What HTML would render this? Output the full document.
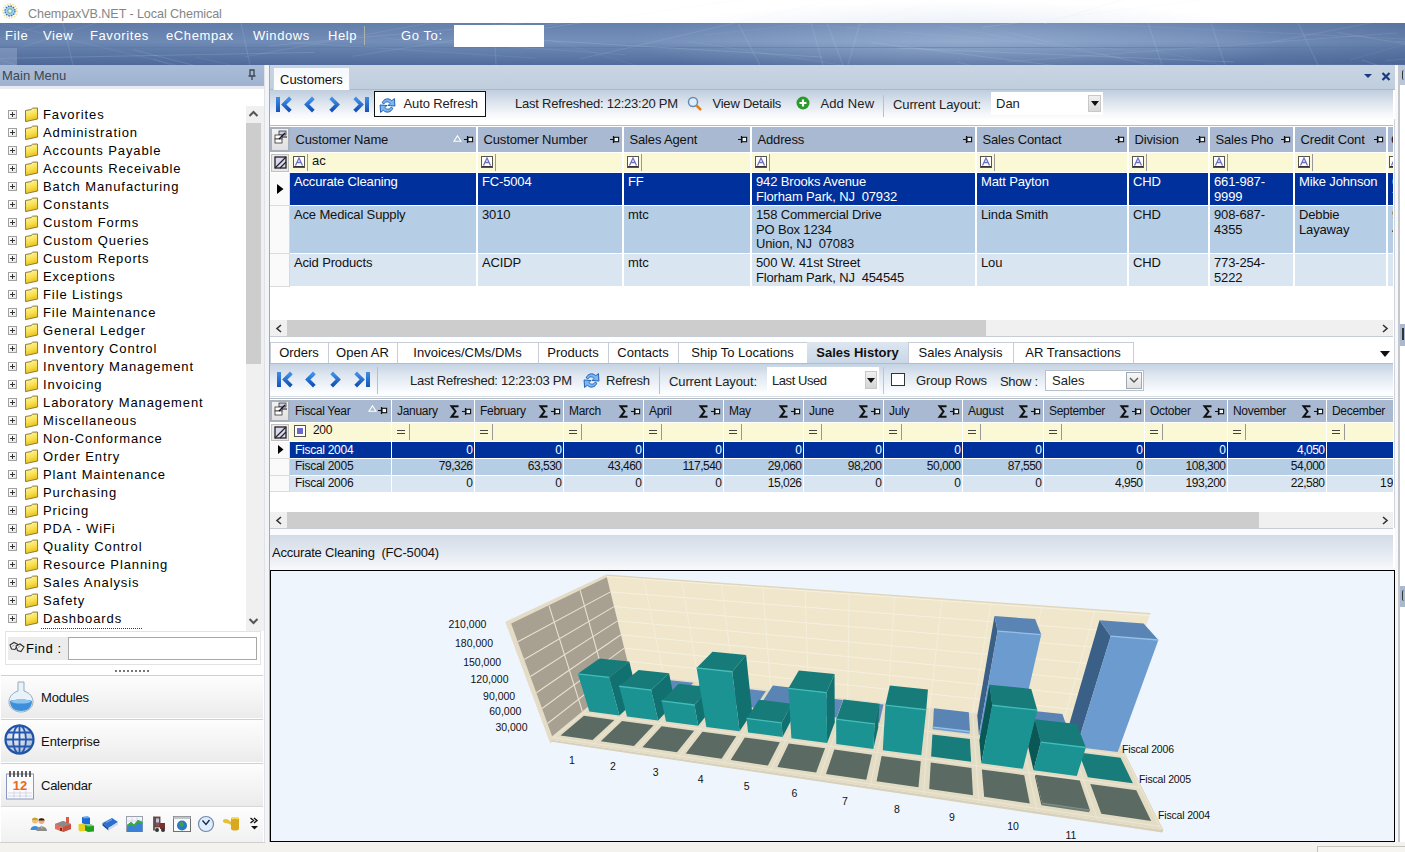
<!DOCTYPE html>
<html><head><meta charset="utf-8">
<style>
*{margin:0;padding:0;box-sizing:border-box}
html,body{width:1405px;height:852px;overflow:hidden;background:#fff;font-family:"Liberation Sans",sans-serif;font-size:13px;color:#000}
.a{position:absolute}
.t{position:absolute;white-space:pre;line-height:1}
svg{position:absolute;overflow:visible}
</style></head><body>
<div class="a" style="left:0px;top:0px;width:1405px;height:23px;background:#fff"></div>
<svg style="left:2px;top:3px" width="16" height="16" viewBox="0 0 16 16"><circle cx="8" cy="8" r="7" fill="none" stroke="#f0d890" stroke-width="1.5" stroke-dasharray="1.5 1.2"/><circle cx="8" cy="8" r="5" fill="#9fd0f0" stroke="#3070b0" stroke-width="1.3" stroke-dasharray="1.6 1"/><circle cx="8" cy="8" r="2.2" fill="#e8f4ff" stroke="#5a9a5a" stroke-width="0.8"/></svg>
<div class="t" style="left:28px;top:7.53px;font-size:12.6px;color:#858585;letter-spacing:-0.087px;">ChempaxVB.NET - Local Chemical</div>
<svg style="left:0;top:23px" width="1405" height="42" viewBox="0 0 1405 42"><defs><linearGradient id="mbv" x1="0" y1="0" x2="0" y2="1"><stop offset="0" stop-color="#6480ac"/><stop offset="0.45" stop-color="#7590ba"/><stop offset="0.6" stop-color="#6784b0"/><stop offset="1" stop-color="#516c9c"/></linearGradient><radialGradient id="mbr" cx="0.5" cy="0.5" r="0.5"><stop offset="0" stop-color="#b8cae4" stop-opacity="0.45"/><stop offset="1" stop-color="#b8cae4" stop-opacity="0"/></radialGradient><linearGradient id="mbh" x1="0" y1="0" x2="1" y2="0"><stop offset="0" stop-color="#3a5080" stop-opacity="0.15"/><stop offset="0.35" stop-color="#3a5080" stop-opacity="0"/><stop offset="0.85" stop-color="#3a5080" stop-opacity="0"/><stop offset="1" stop-color="#2a4070" stop-opacity="0.2"/></linearGradient></defs><rect width="1405" height="42" fill="url(#mbv)"/><rect width="1405" height="42" fill="url(#mbh)"/><ellipse cx="960" cy="18" rx="330" ry="40" fill="url(#mbr)"/><rect x="0" y="24" width="1405" height="1" fill="#5a76a4" fill-opacity="0.5"/><line x1="269" y1="22.9" x2="600" y2="-7.3" stroke="#dfe8f8" stroke-opacity="0.12" stroke-width="1"/><line x1="2" y1="0.6" x2="229" y2="54.4" stroke="#dfe8f8" stroke-opacity="0.08" stroke-width="1"/><line x1="1443" y1="19.8" x2="1736" y2="88.7" stroke="#dfe8f8" stroke-opacity="0.12" stroke-width="1"/><line x1="133" y1="26.7" x2="440" y2="105.7" stroke="#dfe8f8" stroke-opacity="0.13" stroke-width="1"/><line x1="941" y1="2.7" x2="1268" y2="61.9" stroke="#dfe8f8" stroke-opacity="0.08" stroke-width="1"/><line x1="-52" y1="36.4" x2="314" y2="29.4" stroke="#dfe8f8" stroke-opacity="0.15" stroke-width="1"/><line x1="1007" y1="38.7" x2="1397" y2="10.0" stroke="#dfe8f8" stroke-opacity="0.10" stroke-width="1"/><line x1="1350" y1="36.9" x2="1541" y2="-16.8" stroke="#dfe8f8" stroke-opacity="0.07" stroke-width="1"/><line x1="1396" y1="18.3" x2="1637" y2="39.6" stroke="#dfe8f8" stroke-opacity="0.11" stroke-width="1"/><line x1="498" y1="14.7" x2="823" y2="34.1" stroke="#dfe8f8" stroke-opacity="0.15" stroke-width="1"/><line x1="957" y1="39.0" x2="1404" y2="150.6" stroke="#dfe8f8" stroke-opacity="0.12" stroke-width="1"/><line x1="153" y1="36.1" x2="574" y2="173.2" stroke="#dfe8f8" stroke-opacity="0.11" stroke-width="1"/><line x1="1006" y1="8.9" x2="1328" y2="83.6" stroke="#dfe8f8" stroke-opacity="0.08" stroke-width="1"/><line x1="-2" y1="35.9" x2="175" y2="96.4" stroke="#dfe8f8" stroke-opacity="0.14" stroke-width="1"/><line x1="536" y1="6.3" x2="917" y2="-48.6" stroke="#dfe8f8" stroke-opacity="0.15" stroke-width="1"/><line x1="-32" y1="25.8" x2="334" y2="-90.6" stroke="#dfe8f8" stroke-opacity="0.09" stroke-width="1"/><line x1="1265" y1="41.2" x2="1715" y2="42.9" stroke="#dfe8f8" stroke-opacity="0.08" stroke-width="1"/><line x1="19" y1="25.2" x2="229" y2="-43.4" stroke="#dfe8f8" stroke-opacity="0.09" stroke-width="1"/><line x1="846" y1="6.6" x2="1257" y2="-124.9" stroke="#dfe8f8" stroke-opacity="0.08" stroke-width="1"/><line x1="1386" y1="37.7" x2="1674" y2="13.0" stroke="#dfe8f8" stroke-opacity="0.11" stroke-width="1"/><line x1="898" y1="25.0" x2="1234" y2="39.0" stroke="#dfe8f8" stroke-opacity="0.15" stroke-width="1"/><line x1="686" y1="18.1" x2="907" y2="52.2" stroke="#dfe8f8" stroke-opacity="0.08" stroke-width="1"/><line x1="1416" y1="21.9" x2="1569" y2="27.1" stroke="#dfe8f8" stroke-opacity="0.10" stroke-width="1"/><line x1="799" y1="0.8" x2="1139" y2="28.4" stroke="#dfe8f8" stroke-opacity="0.06" stroke-width="1"/><line x1="872" y1="19.6" x2="1128" y2="51.7" stroke="#dfe8f8" stroke-opacity="0.13" stroke-width="1"/><line x1="1044" y1="0.9" x2="1397" y2="-107.6" stroke="#dfe8f8" stroke-opacity="0.16" stroke-width="1"/><line x1="289" y1="19.2" x2="535" y2="35.1" stroke="#dfe8f8" stroke-opacity="0.09" stroke-width="1"/><line x1="385" y1="15.5" x2="625" y2="31.6" stroke="#dfe8f8" stroke-opacity="0.09" stroke-width="1"/><line x1="1097" y1="1.1" x2="1468" y2="19.1" stroke="#dfe8f8" stroke-opacity="0.08" stroke-width="1"/><line x1="245" y1="33.8" x2="451" y2="-4.0" stroke="#dfe8f8" stroke-opacity="0.10" stroke-width="1"/><line x1="982" y1="4.3" x2="1232" y2="-26.9" stroke="#dfe8f8" stroke-opacity="0.14" stroke-width="1"/><line x1="580" y1="35.9" x2="831" y2="-22.2" stroke="#dfe8f8" stroke-opacity="0.12" stroke-width="1"/><line x1="1272" y1="18.9" x2="1458" y2="-16.9" stroke="#dfe8f8" stroke-opacity="0.11" stroke-width="1"/><line x1="196" y1="33.9" x2="401" y2="82.5" stroke="#dfe8f8" stroke-opacity="0.08" stroke-width="1"/><line x1="1151" y1="27.0" x2="1405" y2="81.3" stroke="#dfe8f8" stroke-opacity="0.06" stroke-width="1"/><line x1="353" y1="33.3" x2="606" y2="-7.3" stroke="#dfe8f8" stroke-opacity="0.10" stroke-width="1"/><line x1="551" y1="17.2" x2="747" y2="75.1" stroke="#dfe8f8" stroke-opacity="0.05" stroke-width="1"/><line x1="1362" y1="37.0" x2="1642" y2="132.5" stroke="#dfe8f8" stroke-opacity="0.15" stroke-width="1"/><line x1="1337" y1="9.3" x2="1738" y2="78.2" stroke="#dfe8f8" stroke-opacity="0.12" stroke-width="1"/><line x1="704" y1="12.1" x2="923" y2="-12.1" stroke="#dfe8f8" stroke-opacity="0.06" stroke-width="1"/><line x1="827" y1="0" x2="843" y2="42" stroke="#dfe8f8" stroke-opacity="0.12" stroke-width="1.2"/><line x1="63" y1="0" x2="73" y2="42" stroke="#dfe8f8" stroke-opacity="0.12" stroke-width="1.2"/><line x1="1298" y1="0" x2="1318" y2="42" stroke="#dfe8f8" stroke-opacity="0.12" stroke-width="1.2"/><line x1="811" y1="0" x2="823" y2="42" stroke="#dfe8f8" stroke-opacity="0.12" stroke-width="1.2"/><line x1="241" y1="0" x2="250" y2="42" stroke="#dfe8f8" stroke-opacity="0.12" stroke-width="1.2"/><line x1="738" y1="0" x2="760" y2="42" stroke="#dfe8f8" stroke-opacity="0.12" stroke-width="1.2"/><line x1="860" y1="0" x2="848" y2="42" stroke="#dfe8f8" stroke-opacity="0.12" stroke-width="1.2"/><line x1="1211" y1="0" x2="1225" y2="42" stroke="#dfe8f8" stroke-opacity="0.12" stroke-width="1.2"/><line x1="494" y1="0" x2="496" y2="42" stroke="#dfe8f8" stroke-opacity="0.12" stroke-width="1.2"/><line x1="1148" y1="0" x2="1162" y2="42" stroke="#dfe8f8" stroke-opacity="0.12" stroke-width="1.2"/><rect x="0" y="25" width="17" height="17" fill="#8ea3c6" fill-opacity="0.55"/></svg>
<div class="t" style="left:5px;top:29.00px;font-size:13px;color:#fff;letter-spacing:0.6px">File</div>
<div class="t" style="left:43px;top:29.00px;font-size:13px;color:#fff;letter-spacing:0.6px">View</div>
<div class="t" style="left:90px;top:29.00px;font-size:13px;color:#fff;letter-spacing:0.6px">Favorites</div>
<div class="t" style="left:166px;top:29.00px;font-size:13px;color:#fff;letter-spacing:0.6px">eChempax</div>
<div class="t" style="left:253px;top:29.00px;font-size:13px;color:#fff;letter-spacing:0.6px">Windows</div>
<div class="t" style="left:328px;top:29.00px;font-size:13px;color:#fff;letter-spacing:0.6px">Help</div>
<div class="t" style="left:401px;top:29.00px;font-size:13px;color:#fff;letter-spacing:0.6px">Go To:</div>
<div class="a" style="left:364px;top:26px;width:1px;height:19px;background:rgba(230,210,160,0.55)"></div>
<div class="a" style="left:454px;top:25px;width:90px;height:22px;background:#fff"></div>
<div class="a" style="left:0px;top:65px;width:265px;height:21px;background:linear-gradient(180deg,#a9bcd8,#9fb3d0)"></div>
<div class="t" style="left:2px;top:68.50px;font-size:13px;color:#3d4652;">Main Menu</div>
<svg style="left:247px;top:69px" width="10" height="12" viewBox="0 0 10 12"><path d="M3 1h4v6h-4z M1.5 7h7 M5 7v4" fill="none" stroke="#3d4652" stroke-width="1.3"/></svg>
<div class="a" style="left:0px;top:86px;width:265px;height:3px;background:#e8ebef"></div>
<div class="a" style="left:0px;top:89px;width:265px;height:754px;background:#fff"></div>
<div class="a" style="left:264px;top:65px;width:1px;height:778px;background:#dfe3e8"></div>
<div class="a" style="left:265px;top:65px;width:4px;height:787px;background:#f2f4f7"></div>
<div class="a" style="left:269px;top:65px;width:1px;height:787px;background:#9ea8b6"></div>
<svg style="left:0;top:0" width="0" height="0"><defs><linearGradient id="fg" x1="0" y1="0" x2="0.3" y2="1"><stop offset="0" stop-color="#fffbb0"/><stop offset="0.6" stop-color="#f8e050"/><stop offset="1" stop-color="#e8c018"/></linearGradient></defs></svg>
<div class="a" style="left:8px;top:110px;width:9px;height:9px;border:1px solid #a0a0a0;background:linear-gradient(135deg,#fff,#e6e6e6)"></div>
<div class="a" style="left:10px;top:114px;width:5px;height:1px;background:#333"></div>
<div class="a" style="left:12px;top:112px;width:1px;height:5px;background:#333"></div>
<svg style="left:24px;top:107px" width="16" height="16" viewBox="0 0 16 16"><path d="M1.5 3.5 L7 2.6 L8.5 1.2 L13.5 1 L13.6 12 L1.6 14.6 Z" fill="url(#fg)" stroke="#8d7a3a" stroke-width="1"/></svg>
<div class="t" style="left:43px;top:108.00px;font-size:13px;color:#000;letter-spacing:0.9px">Favorites</div>
<div class="a" style="left:8px;top:128px;width:9px;height:9px;border:1px solid #a0a0a0;background:linear-gradient(135deg,#fff,#e6e6e6)"></div>
<div class="a" style="left:10px;top:132px;width:5px;height:1px;background:#333"></div>
<div class="a" style="left:12px;top:130px;width:1px;height:5px;background:#333"></div>
<svg style="left:24px;top:125px" width="16" height="16" viewBox="0 0 16 16"><path d="M1.5 3.5 L7 2.6 L8.5 1.2 L13.5 1 L13.6 12 L1.6 14.6 Z" fill="url(#fg)" stroke="#8d7a3a" stroke-width="1"/></svg>
<div class="t" style="left:43px;top:126.00px;font-size:13px;color:#000;letter-spacing:0.9px">Administration</div>
<div class="a" style="left:8px;top:146px;width:9px;height:9px;border:1px solid #a0a0a0;background:linear-gradient(135deg,#fff,#e6e6e6)"></div>
<div class="a" style="left:10px;top:150px;width:5px;height:1px;background:#333"></div>
<div class="a" style="left:12px;top:148px;width:1px;height:5px;background:#333"></div>
<svg style="left:24px;top:143px" width="16" height="16" viewBox="0 0 16 16"><path d="M1.5 3.5 L7 2.6 L8.5 1.2 L13.5 1 L13.6 12 L1.6 14.6 Z" fill="url(#fg)" stroke="#8d7a3a" stroke-width="1"/></svg>
<div class="t" style="left:43px;top:144.00px;font-size:13px;color:#000;letter-spacing:0.9px">Accounts Payable</div>
<div class="a" style="left:8px;top:164px;width:9px;height:9px;border:1px solid #a0a0a0;background:linear-gradient(135deg,#fff,#e6e6e6)"></div>
<div class="a" style="left:10px;top:168px;width:5px;height:1px;background:#333"></div>
<div class="a" style="left:12px;top:166px;width:1px;height:5px;background:#333"></div>
<svg style="left:24px;top:161px" width="16" height="16" viewBox="0 0 16 16"><path d="M1.5 3.5 L7 2.6 L8.5 1.2 L13.5 1 L13.6 12 L1.6 14.6 Z" fill="url(#fg)" stroke="#8d7a3a" stroke-width="1"/></svg>
<div class="t" style="left:43px;top:162.00px;font-size:13px;color:#000;letter-spacing:0.9px">Accounts Receivable</div>
<div class="a" style="left:8px;top:182px;width:9px;height:9px;border:1px solid #a0a0a0;background:linear-gradient(135deg,#fff,#e6e6e6)"></div>
<div class="a" style="left:10px;top:186px;width:5px;height:1px;background:#333"></div>
<div class="a" style="left:12px;top:184px;width:1px;height:5px;background:#333"></div>
<svg style="left:24px;top:179px" width="16" height="16" viewBox="0 0 16 16"><path d="M1.5 3.5 L7 2.6 L8.5 1.2 L13.5 1 L13.6 12 L1.6 14.6 Z" fill="url(#fg)" stroke="#8d7a3a" stroke-width="1"/></svg>
<div class="t" style="left:43px;top:180.00px;font-size:13px;color:#000;letter-spacing:0.9px">Batch Manufacturing</div>
<div class="a" style="left:8px;top:200px;width:9px;height:9px;border:1px solid #a0a0a0;background:linear-gradient(135deg,#fff,#e6e6e6)"></div>
<div class="a" style="left:10px;top:204px;width:5px;height:1px;background:#333"></div>
<div class="a" style="left:12px;top:202px;width:1px;height:5px;background:#333"></div>
<svg style="left:24px;top:197px" width="16" height="16" viewBox="0 0 16 16"><path d="M1.5 3.5 L7 2.6 L8.5 1.2 L13.5 1 L13.6 12 L1.6 14.6 Z" fill="url(#fg)" stroke="#8d7a3a" stroke-width="1"/></svg>
<div class="t" style="left:43px;top:198.00px;font-size:13px;color:#000;letter-spacing:0.9px">Constants</div>
<div class="a" style="left:8px;top:218px;width:9px;height:9px;border:1px solid #a0a0a0;background:linear-gradient(135deg,#fff,#e6e6e6)"></div>
<div class="a" style="left:10px;top:222px;width:5px;height:1px;background:#333"></div>
<div class="a" style="left:12px;top:220px;width:1px;height:5px;background:#333"></div>
<svg style="left:24px;top:215px" width="16" height="16" viewBox="0 0 16 16"><path d="M1.5 3.5 L7 2.6 L8.5 1.2 L13.5 1 L13.6 12 L1.6 14.6 Z" fill="url(#fg)" stroke="#8d7a3a" stroke-width="1"/></svg>
<div class="t" style="left:43px;top:216.00px;font-size:13px;color:#000;letter-spacing:0.9px">Custom Forms</div>
<div class="a" style="left:8px;top:236px;width:9px;height:9px;border:1px solid #a0a0a0;background:linear-gradient(135deg,#fff,#e6e6e6)"></div>
<div class="a" style="left:10px;top:240px;width:5px;height:1px;background:#333"></div>
<div class="a" style="left:12px;top:238px;width:1px;height:5px;background:#333"></div>
<svg style="left:24px;top:233px" width="16" height="16" viewBox="0 0 16 16"><path d="M1.5 3.5 L7 2.6 L8.5 1.2 L13.5 1 L13.6 12 L1.6 14.6 Z" fill="url(#fg)" stroke="#8d7a3a" stroke-width="1"/></svg>
<div class="t" style="left:43px;top:234.00px;font-size:13px;color:#000;letter-spacing:0.9px">Custom Queries</div>
<div class="a" style="left:8px;top:254px;width:9px;height:9px;border:1px solid #a0a0a0;background:linear-gradient(135deg,#fff,#e6e6e6)"></div>
<div class="a" style="left:10px;top:258px;width:5px;height:1px;background:#333"></div>
<div class="a" style="left:12px;top:256px;width:1px;height:5px;background:#333"></div>
<svg style="left:24px;top:251px" width="16" height="16" viewBox="0 0 16 16"><path d="M1.5 3.5 L7 2.6 L8.5 1.2 L13.5 1 L13.6 12 L1.6 14.6 Z" fill="url(#fg)" stroke="#8d7a3a" stroke-width="1"/></svg>
<div class="t" style="left:43px;top:252.00px;font-size:13px;color:#000;letter-spacing:0.9px">Custom Reports</div>
<div class="a" style="left:8px;top:272px;width:9px;height:9px;border:1px solid #a0a0a0;background:linear-gradient(135deg,#fff,#e6e6e6)"></div>
<div class="a" style="left:10px;top:276px;width:5px;height:1px;background:#333"></div>
<div class="a" style="left:12px;top:274px;width:1px;height:5px;background:#333"></div>
<svg style="left:24px;top:269px" width="16" height="16" viewBox="0 0 16 16"><path d="M1.5 3.5 L7 2.6 L8.5 1.2 L13.5 1 L13.6 12 L1.6 14.6 Z" fill="url(#fg)" stroke="#8d7a3a" stroke-width="1"/></svg>
<div class="t" style="left:43px;top:270.00px;font-size:13px;color:#000;letter-spacing:0.9px">Exceptions</div>
<div class="a" style="left:8px;top:290px;width:9px;height:9px;border:1px solid #a0a0a0;background:linear-gradient(135deg,#fff,#e6e6e6)"></div>
<div class="a" style="left:10px;top:294px;width:5px;height:1px;background:#333"></div>
<div class="a" style="left:12px;top:292px;width:1px;height:5px;background:#333"></div>
<svg style="left:24px;top:287px" width="16" height="16" viewBox="0 0 16 16"><path d="M1.5 3.5 L7 2.6 L8.5 1.2 L13.5 1 L13.6 12 L1.6 14.6 Z" fill="url(#fg)" stroke="#8d7a3a" stroke-width="1"/></svg>
<div class="t" style="left:43px;top:288.00px;font-size:13px;color:#000;letter-spacing:0.9px">File Listings</div>
<div class="a" style="left:8px;top:308px;width:9px;height:9px;border:1px solid #a0a0a0;background:linear-gradient(135deg,#fff,#e6e6e6)"></div>
<div class="a" style="left:10px;top:312px;width:5px;height:1px;background:#333"></div>
<div class="a" style="left:12px;top:310px;width:1px;height:5px;background:#333"></div>
<svg style="left:24px;top:305px" width="16" height="16" viewBox="0 0 16 16"><path d="M1.5 3.5 L7 2.6 L8.5 1.2 L13.5 1 L13.6 12 L1.6 14.6 Z" fill="url(#fg)" stroke="#8d7a3a" stroke-width="1"/></svg>
<div class="t" style="left:43px;top:306.00px;font-size:13px;color:#000;letter-spacing:0.9px">File Maintenance</div>
<div class="a" style="left:8px;top:326px;width:9px;height:9px;border:1px solid #a0a0a0;background:linear-gradient(135deg,#fff,#e6e6e6)"></div>
<div class="a" style="left:10px;top:330px;width:5px;height:1px;background:#333"></div>
<div class="a" style="left:12px;top:328px;width:1px;height:5px;background:#333"></div>
<svg style="left:24px;top:323px" width="16" height="16" viewBox="0 0 16 16"><path d="M1.5 3.5 L7 2.6 L8.5 1.2 L13.5 1 L13.6 12 L1.6 14.6 Z" fill="url(#fg)" stroke="#8d7a3a" stroke-width="1"/></svg>
<div class="t" style="left:43px;top:324.00px;font-size:13px;color:#000;letter-spacing:0.9px">General Ledger</div>
<div class="a" style="left:8px;top:344px;width:9px;height:9px;border:1px solid #a0a0a0;background:linear-gradient(135deg,#fff,#e6e6e6)"></div>
<div class="a" style="left:10px;top:348px;width:5px;height:1px;background:#333"></div>
<div class="a" style="left:12px;top:346px;width:1px;height:5px;background:#333"></div>
<svg style="left:24px;top:341px" width="16" height="16" viewBox="0 0 16 16"><path d="M1.5 3.5 L7 2.6 L8.5 1.2 L13.5 1 L13.6 12 L1.6 14.6 Z" fill="url(#fg)" stroke="#8d7a3a" stroke-width="1"/></svg>
<div class="t" style="left:43px;top:342.00px;font-size:13px;color:#000;letter-spacing:0.9px">Inventory Control</div>
<div class="a" style="left:8px;top:362px;width:9px;height:9px;border:1px solid #a0a0a0;background:linear-gradient(135deg,#fff,#e6e6e6)"></div>
<div class="a" style="left:10px;top:366px;width:5px;height:1px;background:#333"></div>
<div class="a" style="left:12px;top:364px;width:1px;height:5px;background:#333"></div>
<svg style="left:24px;top:359px" width="16" height="16" viewBox="0 0 16 16"><path d="M1.5 3.5 L7 2.6 L8.5 1.2 L13.5 1 L13.6 12 L1.6 14.6 Z" fill="url(#fg)" stroke="#8d7a3a" stroke-width="1"/></svg>
<div class="t" style="left:43px;top:360.00px;font-size:13px;color:#000;letter-spacing:0.9px">Inventory Management</div>
<div class="a" style="left:8px;top:380px;width:9px;height:9px;border:1px solid #a0a0a0;background:linear-gradient(135deg,#fff,#e6e6e6)"></div>
<div class="a" style="left:10px;top:384px;width:5px;height:1px;background:#333"></div>
<div class="a" style="left:12px;top:382px;width:1px;height:5px;background:#333"></div>
<svg style="left:24px;top:377px" width="16" height="16" viewBox="0 0 16 16"><path d="M1.5 3.5 L7 2.6 L8.5 1.2 L13.5 1 L13.6 12 L1.6 14.6 Z" fill="url(#fg)" stroke="#8d7a3a" stroke-width="1"/></svg>
<div class="t" style="left:43px;top:378.00px;font-size:13px;color:#000;letter-spacing:0.9px">Invoicing</div>
<div class="a" style="left:8px;top:398px;width:9px;height:9px;border:1px solid #a0a0a0;background:linear-gradient(135deg,#fff,#e6e6e6)"></div>
<div class="a" style="left:10px;top:402px;width:5px;height:1px;background:#333"></div>
<div class="a" style="left:12px;top:400px;width:1px;height:5px;background:#333"></div>
<svg style="left:24px;top:395px" width="16" height="16" viewBox="0 0 16 16"><path d="M1.5 3.5 L7 2.6 L8.5 1.2 L13.5 1 L13.6 12 L1.6 14.6 Z" fill="url(#fg)" stroke="#8d7a3a" stroke-width="1"/></svg>
<div class="t" style="left:43px;top:396.00px;font-size:13px;color:#000;letter-spacing:0.9px">Laboratory Management</div>
<div class="a" style="left:8px;top:416px;width:9px;height:9px;border:1px solid #a0a0a0;background:linear-gradient(135deg,#fff,#e6e6e6)"></div>
<div class="a" style="left:10px;top:420px;width:5px;height:1px;background:#333"></div>
<div class="a" style="left:12px;top:418px;width:1px;height:5px;background:#333"></div>
<svg style="left:24px;top:413px" width="16" height="16" viewBox="0 0 16 16"><path d="M1.5 3.5 L7 2.6 L8.5 1.2 L13.5 1 L13.6 12 L1.6 14.6 Z" fill="url(#fg)" stroke="#8d7a3a" stroke-width="1"/></svg>
<div class="t" style="left:43px;top:414.00px;font-size:13px;color:#000;letter-spacing:0.9px">Miscellaneous</div>
<div class="a" style="left:8px;top:434px;width:9px;height:9px;border:1px solid #a0a0a0;background:linear-gradient(135deg,#fff,#e6e6e6)"></div>
<div class="a" style="left:10px;top:438px;width:5px;height:1px;background:#333"></div>
<div class="a" style="left:12px;top:436px;width:1px;height:5px;background:#333"></div>
<svg style="left:24px;top:431px" width="16" height="16" viewBox="0 0 16 16"><path d="M1.5 3.5 L7 2.6 L8.5 1.2 L13.5 1 L13.6 12 L1.6 14.6 Z" fill="url(#fg)" stroke="#8d7a3a" stroke-width="1"/></svg>
<div class="t" style="left:43px;top:432.00px;font-size:13px;color:#000;letter-spacing:0.9px">Non-Conformance</div>
<div class="a" style="left:8px;top:452px;width:9px;height:9px;border:1px solid #a0a0a0;background:linear-gradient(135deg,#fff,#e6e6e6)"></div>
<div class="a" style="left:10px;top:456px;width:5px;height:1px;background:#333"></div>
<div class="a" style="left:12px;top:454px;width:1px;height:5px;background:#333"></div>
<svg style="left:24px;top:449px" width="16" height="16" viewBox="0 0 16 16"><path d="M1.5 3.5 L7 2.6 L8.5 1.2 L13.5 1 L13.6 12 L1.6 14.6 Z" fill="url(#fg)" stroke="#8d7a3a" stroke-width="1"/></svg>
<div class="t" style="left:43px;top:450.00px;font-size:13px;color:#000;letter-spacing:0.9px">Order Entry</div>
<div class="a" style="left:8px;top:470px;width:9px;height:9px;border:1px solid #a0a0a0;background:linear-gradient(135deg,#fff,#e6e6e6)"></div>
<div class="a" style="left:10px;top:474px;width:5px;height:1px;background:#333"></div>
<div class="a" style="left:12px;top:472px;width:1px;height:5px;background:#333"></div>
<svg style="left:24px;top:467px" width="16" height="16" viewBox="0 0 16 16"><path d="M1.5 3.5 L7 2.6 L8.5 1.2 L13.5 1 L13.6 12 L1.6 14.6 Z" fill="url(#fg)" stroke="#8d7a3a" stroke-width="1"/></svg>
<div class="t" style="left:43px;top:468.00px;font-size:13px;color:#000;letter-spacing:0.9px">Plant Maintenance</div>
<div class="a" style="left:8px;top:488px;width:9px;height:9px;border:1px solid #a0a0a0;background:linear-gradient(135deg,#fff,#e6e6e6)"></div>
<div class="a" style="left:10px;top:492px;width:5px;height:1px;background:#333"></div>
<div class="a" style="left:12px;top:490px;width:1px;height:5px;background:#333"></div>
<svg style="left:24px;top:485px" width="16" height="16" viewBox="0 0 16 16"><path d="M1.5 3.5 L7 2.6 L8.5 1.2 L13.5 1 L13.6 12 L1.6 14.6 Z" fill="url(#fg)" stroke="#8d7a3a" stroke-width="1"/></svg>
<div class="t" style="left:43px;top:486.00px;font-size:13px;color:#000;letter-spacing:0.9px">Purchasing</div>
<div class="a" style="left:8px;top:506px;width:9px;height:9px;border:1px solid #a0a0a0;background:linear-gradient(135deg,#fff,#e6e6e6)"></div>
<div class="a" style="left:10px;top:510px;width:5px;height:1px;background:#333"></div>
<div class="a" style="left:12px;top:508px;width:1px;height:5px;background:#333"></div>
<svg style="left:24px;top:503px" width="16" height="16" viewBox="0 0 16 16"><path d="M1.5 3.5 L7 2.6 L8.5 1.2 L13.5 1 L13.6 12 L1.6 14.6 Z" fill="url(#fg)" stroke="#8d7a3a" stroke-width="1"/></svg>
<div class="t" style="left:43px;top:504.00px;font-size:13px;color:#000;letter-spacing:0.9px">Pricing</div>
<div class="a" style="left:8px;top:524px;width:9px;height:9px;border:1px solid #a0a0a0;background:linear-gradient(135deg,#fff,#e6e6e6)"></div>
<div class="a" style="left:10px;top:528px;width:5px;height:1px;background:#333"></div>
<div class="a" style="left:12px;top:526px;width:1px;height:5px;background:#333"></div>
<svg style="left:24px;top:521px" width="16" height="16" viewBox="0 0 16 16"><path d="M1.5 3.5 L7 2.6 L8.5 1.2 L13.5 1 L13.6 12 L1.6 14.6 Z" fill="url(#fg)" stroke="#8d7a3a" stroke-width="1"/></svg>
<div class="t" style="left:43px;top:522.00px;font-size:13px;color:#000;letter-spacing:0.9px">PDA - WiFi</div>
<div class="a" style="left:8px;top:542px;width:9px;height:9px;border:1px solid #a0a0a0;background:linear-gradient(135deg,#fff,#e6e6e6)"></div>
<div class="a" style="left:10px;top:546px;width:5px;height:1px;background:#333"></div>
<div class="a" style="left:12px;top:544px;width:1px;height:5px;background:#333"></div>
<svg style="left:24px;top:539px" width="16" height="16" viewBox="0 0 16 16"><path d="M1.5 3.5 L7 2.6 L8.5 1.2 L13.5 1 L13.6 12 L1.6 14.6 Z" fill="url(#fg)" stroke="#8d7a3a" stroke-width="1"/></svg>
<div class="t" style="left:43px;top:540.00px;font-size:13px;color:#000;letter-spacing:0.9px">Quality Control</div>
<div class="a" style="left:8px;top:560px;width:9px;height:9px;border:1px solid #a0a0a0;background:linear-gradient(135deg,#fff,#e6e6e6)"></div>
<div class="a" style="left:10px;top:564px;width:5px;height:1px;background:#333"></div>
<div class="a" style="left:12px;top:562px;width:1px;height:5px;background:#333"></div>
<svg style="left:24px;top:557px" width="16" height="16" viewBox="0 0 16 16"><path d="M1.5 3.5 L7 2.6 L8.5 1.2 L13.5 1 L13.6 12 L1.6 14.6 Z" fill="url(#fg)" stroke="#8d7a3a" stroke-width="1"/></svg>
<div class="t" style="left:43px;top:558.00px;font-size:13px;color:#000;letter-spacing:0.9px">Resource Planning</div>
<div class="a" style="left:8px;top:578px;width:9px;height:9px;border:1px solid #a0a0a0;background:linear-gradient(135deg,#fff,#e6e6e6)"></div>
<div class="a" style="left:10px;top:582px;width:5px;height:1px;background:#333"></div>
<div class="a" style="left:12px;top:580px;width:1px;height:5px;background:#333"></div>
<svg style="left:24px;top:575px" width="16" height="16" viewBox="0 0 16 16"><path d="M1.5 3.5 L7 2.6 L8.5 1.2 L13.5 1 L13.6 12 L1.6 14.6 Z" fill="url(#fg)" stroke="#8d7a3a" stroke-width="1"/></svg>
<div class="t" style="left:43px;top:576.00px;font-size:13px;color:#000;letter-spacing:0.9px">Sales Analysis</div>
<div class="a" style="left:8px;top:596px;width:9px;height:9px;border:1px solid #a0a0a0;background:linear-gradient(135deg,#fff,#e6e6e6)"></div>
<div class="a" style="left:10px;top:600px;width:5px;height:1px;background:#333"></div>
<div class="a" style="left:12px;top:598px;width:1px;height:5px;background:#333"></div>
<svg style="left:24px;top:593px" width="16" height="16" viewBox="0 0 16 16"><path d="M1.5 3.5 L7 2.6 L8.5 1.2 L13.5 1 L13.6 12 L1.6 14.6 Z" fill="url(#fg)" stroke="#8d7a3a" stroke-width="1"/></svg>
<div class="t" style="left:43px;top:594.00px;font-size:13px;color:#000;letter-spacing:0.9px">Safety</div>
<div class="a" style="left:8px;top:614px;width:9px;height:9px;border:1px solid #a0a0a0;background:linear-gradient(135deg,#fff,#e6e6e6)"></div>
<div class="a" style="left:10px;top:618px;width:5px;height:1px;background:#333"></div>
<div class="a" style="left:12px;top:616px;width:1px;height:5px;background:#333"></div>
<svg style="left:24px;top:611px" width="16" height="16" viewBox="0 0 16 16"><path d="M1.5 3.5 L7 2.6 L8.5 1.2 L13.5 1 L13.6 12 L1.6 14.6 Z" fill="url(#fg)" stroke="#8d7a3a" stroke-width="1"/></svg>
<div class="t" style="left:43px;top:612.00px;font-size:13px;color:#000;letter-spacing:0.9px">Dashboards</div>
<div class="a" style="left:41px;top:628px;width:102px;height:1px;background:repeating-linear-gradient(90deg,#0a3ca0 0 1px,transparent 1px 2px)"></div>
<div class="a" style="left:246px;top:106px;width:18px;height:525px;background:#f0f0f0"></div>
<div class="a" style="left:246px;top:123px;width:15px;height:241px;background:#cdcdcd"></div>
<svg style="left:248px;top:110px" width="11" height="8" viewBox="0 0 11 8"><path d="M1.5 6 L5.5 2 L9.5 6" fill="none" stroke="#555" stroke-width="2"/></svg>
<svg style="left:248px;top:617px" width="11" height="8" viewBox="0 0 11 8"><path d="M1.5 2 L5.5 6 L9.5 2" fill="none" stroke="#555" stroke-width="2"/></svg>
<div class="a" style="left:5px;top:631px;width:256px;height:34px;border:1px solid #e3e3e3;background:#fff"></div>
<div class="a" style="left:8px;top:637px;width:60px;height:23px;background:#ececec"></div>
<svg style="left:9px;top:641px" width="16" height="12" viewBox="0 0 16 12"><path d="M1 4 L5 1.5 L9 3.5 L6 8.5 L2.5 8Z" fill="#f2f2f2" stroke="#333" stroke-width="1.1"/><path d="M7 5 L11 3 L15 6 L12 10.5 L8.5 9.5Z" fill="#f2f2f2" stroke="#333" stroke-width="1.1"/><path d="M3 5.5 L5.5 4 M9 6.5 L11.5 5" stroke="#888" stroke-width="0.8"/></svg>
<div class="t" style="left:26px;top:642.00px;font-size:13px;color:#000;letter-spacing:0.5px">Find :</div>
<div class="a" style="left:68px;top:637px;width:189px;height:23px;border:1px solid #a8a8a8;background:#fff"></div>
<div class="a" style="left:115px;top:670px;width:36px;height:2px;background:repeating-linear-gradient(90deg,#777 0 2px,transparent 2px 4px)"></div>
<div class="a" style="left:1px;top:675px;width:262px;height:43px;background:linear-gradient(180deg,#fdfdfd,#f3f3f3 60%,#ebebeb);border-top:1px solid #d0d0d0"></div>
<div class="t" style="left:41px;top:691.00px;font-size:13px;color:#111;letter-spacing:-0.189px;">Modules</div>
<div class="a" style="left:1px;top:719px;width:262px;height:43px;background:linear-gradient(180deg,#fdfdfd,#f3f3f3 60%,#ebebeb);border-top:1px solid #d0d0d0"></div>
<div class="t" style="left:41px;top:735.00px;font-size:13px;color:#111;letter-spacing:-0.027px;">Enterprise</div>
<div class="a" style="left:1px;top:763px;width:262px;height:43px;background:linear-gradient(180deg,#fdfdfd,#f3f3f3 60%,#ebebeb);border-top:1px solid #d0d0d0"></div>
<div class="t" style="left:41px;top:779.00px;font-size:13px;color:#111;letter-spacing:-0.250px;">Calendar</div>
<svg style="left:8px;top:680px" width="26" height="34" viewBox="0 0 26 34"><path d="M10 2h6v9 C22 13 25 17 25 22 C25 28 19 32 13 32 C7 32 1 28 1 22 C1 17 4 13 10 11Z" fill="#e8f2fa" stroke="#9ab" stroke-width="1"/><path d="M2 21 C6 19 20 19 24 21 C24 28 19 31 13 31 C7 31 2 28 2 21Z" fill="#3c8fd8"/><ellipse cx="13" cy="21.5" rx="10" ry="2" fill="#8cc4f0"/></svg>
<svg style="left:4px;top:724px" width="31" height="31" viewBox="0 0 31 31"><defs><radialGradient id="gl" cx="0.4" cy="0.35" r="0.7"><stop offset="0" stop-color="#f4f6fa"/><stop offset="1" stop-color="#a8b8d0"/></radialGradient></defs><circle cx="15.5" cy="15.5" r="14" fill="url(#gl)" stroke="#1d52a8" stroke-width="2.2"/><ellipse cx="15.5" cy="15.5" rx="6.5" ry="14" fill="none" stroke="#2458b0" stroke-width="1.8"/><path d="M1.5 15.5h28 M3.5 8.5h24 M3.5 22.5h24 M15.5 1.5v28" stroke="#2458b0" stroke-width="1.8"/></svg>
<svg style="left:5px;top:769px" width="30" height="31" viewBox="0 0 30 31"><rect x="1.5" y="5" width="27" height="25" fill="#fbfbfd" stroke="#8898c0" stroke-width="1"/><path d="M5 2v6 M9 2v6 M13 2v6 M17 2v6 M21 2v6 M25 2v6" stroke="#333" stroke-width="1.5"/><text x="15" y="21" font-family="Liberation Sans" font-size="13" font-weight="bold" fill="#e86a1a" text-anchor="middle">12</text><path d="M3 24h24 M3 27h24 M9 22v7 M15 22v7 M21 22v7" stroke="#c8c8e0" stroke-width="0.7"/></svg>
<div class="a" style="left:1px;top:806px;width:262px;height:37px;background:linear-gradient(180deg,#fefefe,#f0f0f0);border-top:1px solid #d8d8d8"></div>
<svg style="left:30px;top:816px" width="18" height="17" viewBox="0 0 18 17"><circle cx="5" cy="4.5" r="3" fill="#e8c070"/><path d="M2 4 C2 1 8 1 8 4Z" fill="#c8a030"/><path d="M0.5 14 C0.5 8.5 9.5 8.5 9.5 14Z" fill="#3a8ee0"/><circle cx="11.5" cy="5" r="3" fill="#f0a880"/><path d="M8.5 4.5 C8.5 1.5 14.5 1.5 14.5 4.5Z" fill="#222"/><path d="M6.5 15 C6.5 9 17 9 17 15Z" fill="#8a8c90"/><path d="M11.5 9.5 L12 13" stroke="#d8c040" stroke-width="1"/></svg>
<svg style="left:54px;top:816px" width="18" height="17" viewBox="0 0 18 17"><path d="M1 8 L9 5 L17 8 L17 13 L9 16 L1 13Z" fill="#e8705a"/><path d="M1 8 L9 5 L17 8 L9 11Z" fill="#8a8a8a"/><path d="M9 11 L17 8 L17 13 L9 16Z" fill="#c85040"/><rect x="12" y="1" width="3" height="6" fill="#d85a48"/><rect x="6" y="12" width="2" height="3" fill="#803020"/></svg>
<svg style="left:78px;top:816px" width="18" height="17" viewBox="0 0 18 17"><path d="M4 1 L10 0.5 L12 2 L12 8 L6 8.5 L4 7Z" fill="#1a6ad8"/><path d="M4 1 L10 0.5 L12 2 L6 2.5Z" fill="#60a8f0"/><path d="M0.5 8 L6 7.5 L7.5 9 L7.5 15 L2 15.5 L0.5 14Z" fill="#e8d020"/><path d="M7 9 L13 8.5 L16 10 L16 15.5 L10 16 L7 14.5Z" fill="#20a020"/><path d="M7 9 L13 8.5 L16 10 L10 10.5Z" fill="#70d060"/></svg>
<svg style="left:102px;top:817px" width="18" height="17" viewBox="0 0 18 17"><path d="M0.5 6 L10 1 L16 5 L6.5 11Z" fill="#2a70d0"/><path d="M0.5 6 L6.5 11 L6.5 13.5 L0.5 8.5Z" fill="#1a4aa0"/><path d="M6.5 11 L16 5 L16 7.5 L6.5 13.5Z" fill="#d0d8e8"/><path d="M4 5.5 L10 2.5" stroke="#80b0f0" stroke-width="1"/></svg>
<svg style="left:126px;top:816px" width="18" height="17" viewBox="0 0 18 17"><rect x="0.5" y="0.5" width="16" height="15" fill="#f4f4fa" stroke="#9aa0b0" stroke-width="1"/><path d="M0.5 5 H16.5 M0.5 10 H16.5 M6 0.5 V15.5 M11 0.5 V15.5" stroke="#c8c8e0" stroke-width="0.6"/><path d="M1 14 L1 9 L5 6 L8 8.5 L12 4 L16.5 6 L16.5 16 L1 16Z" fill="#3a80d8"/><path d="M1 9 L5 6 L8 8.5 L12 4 L16.5 6 L16.5 8 L12 6.5 L8 11 L5 8.5 L1 11.5Z" fill="#38b030"/></svg>
<svg style="left:152px;top:816px" width="18" height="17" viewBox="0 0 18 17"><rect x="1" y="0.5" width="2" height="14" fill="#6a6060"/><rect x="3" y="1" width="5" height="10" fill="#8a5050" stroke="#5a3030" stroke-width="0.8"/><rect x="4" y="2.5" width="3" height="4" fill="#b8c8d8"/><rect x="8" y="7" width="5" height="6" fill="#7a3030"/><circle cx="5" cy="14" r="2" fill="#333"/><circle cx="11" cy="14" r="2" fill="#333"/></svg>
<svg style="left:173px;top:816px" width="18" height="17" viewBox="0 0 18 17"><rect x="0.5" y="0.5" width="17" height="15" fill="#fafafa" stroke="#707070" stroke-width="1"/><rect x="0.5" y="0.5" width="17" height="2.5" fill="#c0c4cc"/><circle cx="9" cy="9.5" r="5" fill="#2a78c8"/><path d="M6 7 L9 5.5 L11 8 L9.5 11 L7 10Z" fill="#40a040"/></svg>
<svg style="left:198px;top:816px" width="18" height="17" viewBox="0 0 18 17"><circle cx="8" cy="8" r="7.5" fill="#dfeeff" stroke="#7088a8" stroke-width="1.2"/><path d="M4.5 4.5 L8 8.5 L11.5 4" fill="none" stroke="#1a2a4a" stroke-width="1.4"/></svg>
<svg style="left:222px;top:816px" width="18" height="17" viewBox="0 0 18 17"><path d="M1 4 C3 2 6 3 8 5 L10 6.5 L9 9 L6 7.5 C4 7 2 7 1 6Z" fill="#e8c030"/><path d="M9 2 C10 0.5 16 0.5 17 2 L17 13 C16 15 10 15 9 13Z" fill="#d8a820"/><path d="M9 2 C10 0.5 16 0.5 17 2 L16 3.5 C15 2.5 11 2.5 10 3.5Z" fill="#f8e060"/></svg>
<svg style="left:249px;top:817px" width="10" height="14" viewBox="0 0 10 14"><path d="M1.5 1 L4.5 3.5 L1.5 6 M5 1 L8 3.5 L5 6" fill="none" stroke="#111" stroke-width="1.4"/><path d="M2 9 L9 9 L5.5 12.5Z" fill="#111"/></svg>
<div class="a" style="left:270px;top:65px;width:1135px;height:787px;background:#fff"></div>
<div class="a" style="left:270px;top:65px;width:1125px;height:25px;background:linear-gradient(180deg,#c9d5e3,#bfcddd)"></div>
<div class="a" style="left:270px;top:89px;width:1125px;height:1px;background:#a9b9cf"></div>
<div class="a" style="left:273px;top:67px;width:77px;height:23px;background:linear-gradient(180deg,#f4f8fc,#fff);border:1px solid #c6d3e3;border-bottom:none"></div>
<div class="t" style="left:280px;top:73.00px;font-size:13px;color:#111;">Customers</div>
<svg style="left:1363px;top:73px" width="10" height="6" viewBox="0 0 10 6"><path d="M1 1 H9 L5 5Z" fill="#1a3a80"/></svg>
<svg style="left:1381px;top:72px" width="10" height="9" viewBox="0 0 10 9"><path d="M1.5 1 L8.5 8 M8.5 1 L1.5 8" stroke="#1a3a80" stroke-width="2.2"/></svg>
<div class="a" style="left:270px;top:90px;width:1125px;height:29px;background:linear-gradient(180deg,#bfcddd 0%,#dde5ee 45%,#f6f8fb 85%,#fdfdfe 100%)"></div>
<svg style="left:276px;top:97px" width="100" height="20" viewBox="276 97 100 20"><defs><linearGradient id="ng" x1="0" y1="0" x2="0" y2="1"><stop offset="0" stop-color="#3d8ee8"/><stop offset="1" stop-color="#1553b8"/></linearGradient></defs><rect x="276" y="97" width="4" height="15" fill="url(#ng)"/><path d="M289 99.3 L283.8 104.5 L289 109.7" fill="none" stroke="url(#ng)" stroke-width="3.8" stroke-linecap="square"/><path d="M312 99.3 L306.8 104.5 L312 109.7" fill="none" stroke="url(#ng)" stroke-width="3.8" stroke-linecap="square"/><path d="M332 99.3 L337.2 104.5 L332 109.7" fill="none" stroke="url(#ng)" stroke-width="3.8" stroke-linecap="square"/><path d="M356 99.3 L361.2 104.5 L356 109.7" fill="none" stroke="url(#ng)" stroke-width="3.8" stroke-linecap="square"/><rect x="365" y="97" width="4" height="15" fill="url(#ng)"/></svg>
<div class="a" style="left:374px;top:91px;width:112px;height:26px;border:1.5px solid #111;background:#fff"></div>
<svg style="left:379px;top:97px" width="17" height="17" viewBox="0 0 16 16"><path d="M3 5.5 C4.5 1.5 9 0.5 12 3.5 L14.5 1.5 L15 8.5 L8.5 8 L10.5 6 C8.5 4 6 4 4.5 6.5 Z" fill="#79b8f2" stroke="#1e5cb0" stroke-width="0.9"/><path d="M13 10.5 C11.5 14.5 7 15.5 4 12.5 L1.5 14.5 L1 7.5 L7.5 8 L5.5 10 C7.5 12 10 12 11.5 9.5 Z" fill="#79b8f2" stroke="#1e5cb0" stroke-width="0.9"/></svg>
<div class="t" style="left:403.5px;top:97.00px;font-size:13px;color:#222;letter-spacing:-0.124px;">Auto Refresh</div>
<div class="t" style="left:515px;top:97.00px;font-size:13px;color:#222;letter-spacing:-0.234px;">Last Refreshed: 12:23:20 PM</div>
<svg style="left:687px;top:96px" width="16" height="16" viewBox="0 0 16 16"><circle cx="6" cy="6" r="4.5" fill="#dceeff" stroke="#6a8ab0" stroke-width="1.5"/><path d="M9.5 9.5 L14 14" stroke="#e08020" stroke-width="2.5"/></svg>
<div class="t" style="left:712.5px;top:97.00px;font-size:13px;color:#222;letter-spacing:-0.226px;">View Details</div>
<svg style="left:796px;top:96px" width="14" height="14" viewBox="0 0 14 14"><circle cx="7" cy="7" r="6.5" fill="#2a9a2a"/><path d="M7 3.5 V10.5 M3.5 7 H10.5" stroke="#fff" stroke-width="2.2"/></svg>
<div class="t" style="left:820.4px;top:97.00px;font-size:13px;color:#222;letter-spacing:0.159px;">Add New</div>
<div class="a" style="left:883px;top:95px;width:1px;height:22px;background:#b8c0cc"></div>
<div class="t" style="left:893px;top:98.00px;font-size:13px;color:#222;letter-spacing:-0.114px;">Current Layout:</div>
<div class="a" style="left:991px;top:92px;width:112px;height:23px;background:#fff"></div>
<div class="t" style="left:996px;top:97.00px;font-size:13px;color:#222;">Dan</div>
<div class="a" style="left:1088px;top:95px;width:13px;height:17px;background:linear-gradient(180deg,#f0f0f0,#d8d8d8);border:1px solid #c8c8c8"></div>
<svg style="left:1091px;top:101px" width="8" height="5" viewBox="0 0 8 5"><path d="M0 0 H8 L4 5Z" fill="#111"/></svg>
<div class="a" style="left:270px;top:125px;width:1123px;height:1px;background:#b4bcc8"></div>
<div class="a" style="left:270px;top:127px;width:20px;height:25px;background:#a8b0bc"></div>
<div class="a" style="left:272px;top:129px;width:16px;height:21px;background:linear-gradient(180deg,#f2f2f2,#e0e0e0)"></div>
<svg style="left:274px;top:130px" width="14" height="16" viewBox="0 0 14 16"><rect x="5" y="1" width="7" height="4" fill="#c8c8f0" stroke="#333" stroke-width="0.8"/><rect x="1" y="5" width="7" height="4" fill="#fff" stroke="#333" stroke-width="0.8"/><rect x="1" y="9" width="7" height="4" fill="#fff" stroke="#333" stroke-width="0.8"/><path d="M5 9 L11 3" stroke="#111" stroke-width="1.2"/><path d="M8 7 H13" stroke="#111" stroke-width="1"/></svg>
<div class="a" style="left:290px;top:127px;width:186px;height:25px;background:#a8b9d1"></div>
<div class="a" style="left:290px;top:153px;width:186px;height:19px;background:#fbf8d6"></div>
<div class="a" style="left:290px;top:173px;width:186px;height:32px;background:#00309b"></div>
<div class="a" style="left:290px;top:206px;width:186px;height:47px;background:#b5cde5"></div>
<div class="a" style="left:290px;top:254px;width:186px;height:32px;background:#d9e5f1"></div>
<div class="t" style="left:295.5px;top:132.50px;font-size:13px;color:#111;letter-spacing:-0.15px">Customer Name</div>
<svg style="left:464px;top:136px" width="10" height="8" viewBox="0 0 10 8"><path d="M0 3.5 H3.5 M3.5 0 V7" fill="none" stroke="#111" stroke-width="1.2"/><rect x="4" y="1.3" width="4.6" height="4.4" fill="#eef0f4" stroke="#111" stroke-width="1.1"/></svg>
<svg style="left:293px;top:156px" width="12" height="12" viewBox="0 0 12 12"><rect x="0.5" y="0.5" width="11" height="11" fill="#fff" stroke="#555" stroke-width="1"/><path d="M2.5 9.5 L6 2 L9.5 9.5 M4 6.5 H8" fill="none" stroke="#7070c0" stroke-width="1.3"/><path d="M1 10.5 H11" stroke="#333" stroke-width="1"/></svg>
<div class="a" style="left:307px;top:154px;width:1px;height:17px;background:#999"></div>
<div class="a" style="left:478px;top:127px;width:144px;height:25px;background:#a8b9d1"></div>
<div class="a" style="left:478px;top:153px;width:144px;height:19px;background:#fbf8d6"></div>
<div class="a" style="left:478px;top:173px;width:144px;height:32px;background:#00309b"></div>
<div class="a" style="left:478px;top:206px;width:144px;height:47px;background:#b5cde5"></div>
<div class="a" style="left:478px;top:254px;width:144px;height:32px;background:#d9e5f1"></div>
<div class="t" style="left:483.5px;top:132.50px;font-size:13px;color:#111;letter-spacing:-0.15px">Customer Number</div>
<svg style="left:610px;top:136px" width="10" height="8" viewBox="0 0 10 8"><path d="M0 3.5 H3.5 M3.5 0 V7" fill="none" stroke="#111" stroke-width="1.2"/><rect x="4" y="1.3" width="4.6" height="4.4" fill="#eef0f4" stroke="#111" stroke-width="1.1"/></svg>
<svg style="left:481px;top:156px" width="12" height="12" viewBox="0 0 12 12"><rect x="0.5" y="0.5" width="11" height="11" fill="#fff" stroke="#555" stroke-width="1"/><path d="M2.5 9.5 L6 2 L9.5 9.5 M4 6.5 H8" fill="none" stroke="#7070c0" stroke-width="1.3"/><path d="M1 10.5 H11" stroke="#333" stroke-width="1"/></svg>
<div class="a" style="left:495px;top:154px;width:1px;height:17px;background:#999"></div>
<div class="a" style="left:624px;top:127px;width:126px;height:25px;background:#a8b9d1"></div>
<div class="a" style="left:624px;top:153px;width:126px;height:19px;background:#fbf8d6"></div>
<div class="a" style="left:624px;top:173px;width:126px;height:32px;background:#00309b"></div>
<div class="a" style="left:624px;top:206px;width:126px;height:47px;background:#b5cde5"></div>
<div class="a" style="left:624px;top:254px;width:126px;height:32px;background:#d9e5f1"></div>
<div class="t" style="left:629.5px;top:132.50px;font-size:13px;color:#111;letter-spacing:-0.15px">Sales Agent</div>
<svg style="left:738px;top:136px" width="10" height="8" viewBox="0 0 10 8"><path d="M0 3.5 H3.5 M3.5 0 V7" fill="none" stroke="#111" stroke-width="1.2"/><rect x="4" y="1.3" width="4.6" height="4.4" fill="#eef0f4" stroke="#111" stroke-width="1.1"/></svg>
<svg style="left:627px;top:156px" width="12" height="12" viewBox="0 0 12 12"><rect x="0.5" y="0.5" width="11" height="11" fill="#fff" stroke="#555" stroke-width="1"/><path d="M2.5 9.5 L6 2 L9.5 9.5 M4 6.5 H8" fill="none" stroke="#7070c0" stroke-width="1.3"/><path d="M1 10.5 H11" stroke="#333" stroke-width="1"/></svg>
<div class="a" style="left:641px;top:154px;width:1px;height:17px;background:#999"></div>
<div class="a" style="left:752px;top:127px;width:223px;height:25px;background:#a8b9d1"></div>
<div class="a" style="left:752px;top:153px;width:223px;height:19px;background:#fbf8d6"></div>
<div class="a" style="left:752px;top:173px;width:223px;height:32px;background:#00309b"></div>
<div class="a" style="left:752px;top:206px;width:223px;height:47px;background:#b5cde5"></div>
<div class="a" style="left:752px;top:254px;width:223px;height:32px;background:#d9e5f1"></div>
<div class="t" style="left:757.5px;top:132.50px;font-size:13px;color:#111;letter-spacing:-0.15px">Address</div>
<svg style="left:963px;top:136px" width="10" height="8" viewBox="0 0 10 8"><path d="M0 3.5 H3.5 M3.5 0 V7" fill="none" stroke="#111" stroke-width="1.2"/><rect x="4" y="1.3" width="4.6" height="4.4" fill="#eef0f4" stroke="#111" stroke-width="1.1"/></svg>
<svg style="left:755px;top:156px" width="12" height="12" viewBox="0 0 12 12"><rect x="0.5" y="0.5" width="11" height="11" fill="#fff" stroke="#555" stroke-width="1"/><path d="M2.5 9.5 L6 2 L9.5 9.5 M4 6.5 H8" fill="none" stroke="#7070c0" stroke-width="1.3"/><path d="M1 10.5 H11" stroke="#333" stroke-width="1"/></svg>
<div class="a" style="left:769px;top:154px;width:1px;height:17px;background:#999"></div>
<div class="a" style="left:977px;top:127px;width:150px;height:25px;background:#a8b9d1"></div>
<div class="a" style="left:977px;top:153px;width:150px;height:19px;background:#fbf8d6"></div>
<div class="a" style="left:977px;top:173px;width:150px;height:32px;background:#00309b"></div>
<div class="a" style="left:977px;top:206px;width:150px;height:47px;background:#b5cde5"></div>
<div class="a" style="left:977px;top:254px;width:150px;height:32px;background:#d9e5f1"></div>
<div class="t" style="left:982.5px;top:132.50px;font-size:13px;color:#111;letter-spacing:-0.15px">Sales Contact</div>
<svg style="left:1115px;top:136px" width="10" height="8" viewBox="0 0 10 8"><path d="M0 3.5 H3.5 M3.5 0 V7" fill="none" stroke="#111" stroke-width="1.2"/><rect x="4" y="1.3" width="4.6" height="4.4" fill="#eef0f4" stroke="#111" stroke-width="1.1"/></svg>
<svg style="left:980px;top:156px" width="12" height="12" viewBox="0 0 12 12"><rect x="0.5" y="0.5" width="11" height="11" fill="#fff" stroke="#555" stroke-width="1"/><path d="M2.5 9.5 L6 2 L9.5 9.5 M4 6.5 H8" fill="none" stroke="#7070c0" stroke-width="1.3"/><path d="M1 10.5 H11" stroke="#333" stroke-width="1"/></svg>
<div class="a" style="left:994px;top:154px;width:1px;height:17px;background:#999"></div>
<div class="a" style="left:1129px;top:127px;width:79px;height:25px;background:#a8b9d1"></div>
<div class="a" style="left:1129px;top:153px;width:79px;height:19px;background:#fbf8d6"></div>
<div class="a" style="left:1129px;top:173px;width:79px;height:32px;background:#00309b"></div>
<div class="a" style="left:1129px;top:206px;width:79px;height:47px;background:#b5cde5"></div>
<div class="a" style="left:1129px;top:254px;width:79px;height:32px;background:#d9e5f1"></div>
<div class="t" style="left:1134.5px;top:132.50px;font-size:13px;color:#111;letter-spacing:-0.15px">Division</div>
<svg style="left:1196px;top:136px" width="10" height="8" viewBox="0 0 10 8"><path d="M0 3.5 H3.5 M3.5 0 V7" fill="none" stroke="#111" stroke-width="1.2"/><rect x="4" y="1.3" width="4.6" height="4.4" fill="#eef0f4" stroke="#111" stroke-width="1.1"/></svg>
<svg style="left:1132px;top:156px" width="12" height="12" viewBox="0 0 12 12"><rect x="0.5" y="0.5" width="11" height="11" fill="#fff" stroke="#555" stroke-width="1"/><path d="M2.5 9.5 L6 2 L9.5 9.5 M4 6.5 H8" fill="none" stroke="#7070c0" stroke-width="1.3"/><path d="M1 10.5 H11" stroke="#333" stroke-width="1"/></svg>
<div class="a" style="left:1146px;top:154px;width:1px;height:17px;background:#999"></div>
<div class="a" style="left:1210px;top:127px;width:83px;height:25px;background:#a8b9d1"></div>
<div class="a" style="left:1210px;top:153px;width:83px;height:19px;background:#fbf8d6"></div>
<div class="a" style="left:1210px;top:173px;width:83px;height:32px;background:#00309b"></div>
<div class="a" style="left:1210px;top:206px;width:83px;height:47px;background:#b5cde5"></div>
<div class="a" style="left:1210px;top:254px;width:83px;height:32px;background:#d9e5f1"></div>
<div class="t" style="left:1215.5px;top:132.50px;font-size:13px;color:#111;letter-spacing:-0.15px">Sales Pho</div>
<svg style="left:1281px;top:136px" width="10" height="8" viewBox="0 0 10 8"><path d="M0 3.5 H3.5 M3.5 0 V7" fill="none" stroke="#111" stroke-width="1.2"/><rect x="4" y="1.3" width="4.6" height="4.4" fill="#eef0f4" stroke="#111" stroke-width="1.1"/></svg>
<svg style="left:1213px;top:156px" width="12" height="12" viewBox="0 0 12 12"><rect x="0.5" y="0.5" width="11" height="11" fill="#fff" stroke="#555" stroke-width="1"/><path d="M2.5 9.5 L6 2 L9.5 9.5 M4 6.5 H8" fill="none" stroke="#7070c0" stroke-width="1.3"/><path d="M1 10.5 H11" stroke="#333" stroke-width="1"/></svg>
<div class="a" style="left:1227px;top:154px;width:1px;height:17px;background:#999"></div>
<div class="a" style="left:1295px;top:127px;width:91px;height:25px;background:#a8b9d1"></div>
<div class="a" style="left:1295px;top:153px;width:91px;height:19px;background:#fbf8d6"></div>
<div class="a" style="left:1295px;top:173px;width:91px;height:32px;background:#00309b"></div>
<div class="a" style="left:1295px;top:206px;width:91px;height:47px;background:#b5cde5"></div>
<div class="a" style="left:1295px;top:254px;width:91px;height:32px;background:#d9e5f1"></div>
<div class="t" style="left:1300.5px;top:132.50px;font-size:13px;color:#111;letter-spacing:-0.15px">Credit Cont</div>
<svg style="left:1374px;top:136px" width="10" height="8" viewBox="0 0 10 8"><path d="M0 3.5 H3.5 M3.5 0 V7" fill="none" stroke="#111" stroke-width="1.2"/><rect x="4" y="1.3" width="4.6" height="4.4" fill="#eef0f4" stroke="#111" stroke-width="1.1"/></svg>
<svg style="left:1298px;top:156px" width="12" height="12" viewBox="0 0 12 12"><rect x="0.5" y="0.5" width="11" height="11" fill="#fff" stroke="#555" stroke-width="1"/><path d="M2.5 9.5 L6 2 L9.5 9.5 M4 6.5 H8" fill="none" stroke="#7070c0" stroke-width="1.3"/><path d="M1 10.5 H11" stroke="#333" stroke-width="1"/></svg>
<div class="a" style="left:1312px;top:154px;width:1px;height:17px;background:#999"></div>
<div class="a" style="left:1388px;top:127px;width:5px;height:25px;background:#a8b9d1"></div>
<div class="a" style="left:1388px;top:153px;width:5px;height:19px;background:#fbf8d6"></div>
<div class="a" style="left:1388px;top:173px;width:5px;height:32px;background:#00309b"></div>
<div class="a" style="left:1388px;top:206px;width:5px;height:47px;background:#b5cde5"></div>
<div class="a" style="left:1388px;top:254px;width:5px;height:32px;background:#d9e5f1"></div>
<div class="t" style="left:1391px;top:132.50px;font-size:13px;color:#111;">C</div>
<svg style="left:1389px;top:156px" width="12" height="12" viewBox="0 0 12 12"><rect x="0.5" y="0.5" width="11" height="11" fill="#fff" stroke="#555" stroke-width="1"/><path d="M2.5 9.5 L6 2 L9.5 9.5 M4 6.5 H8" fill="none" stroke="#7070c0" stroke-width="1.3"/><path d="M1 10.5 H11" stroke="#333" stroke-width="1"/></svg>
<svg style="left:453px;top:135px" width="9" height="7" viewBox="0 0 9 7"><path d="M4.5 0.8 L8 6.2 H1Z" fill="none" stroke="#fff" stroke-width="1.1"/></svg>
<div class="a" style="left:270px;top:153px;width:20px;height:19px;background:#fff"></div>
<div class="a" style="left:271px;top:154px;width:18px;height:18px;background:#e9e9ea;border:1px solid #c0c0c0"></div>
<svg style="left:274px;top:156px" width="13" height="13" viewBox="0 0 13 13"><rect x="1" y="1" width="11" height="11" fill="#d8d8f0" stroke="#222" stroke-width="1.3"/><path d="M1 12 L12 1 M6 12 L12 6" stroke="#222" stroke-width="1.2"/></svg>
<div class="a" style="left:270px;top:173px;width:20px;height:113px;background:#fafafa"></div>
<div class="a" style="left:289px;top:173px;width:1px;height:113px;background:#d8d8d8"></div>
<div class="a" style="left:270px;top:205px;width:20px;height:1px;background:#dcdcdc"></div>
<div class="a" style="left:270px;top:253px;width:20px;height:1px;background:#dcdcdc"></div>
<div class="a" style="left:270px;top:286px;width:20px;height:1px;background:#dcdcdc"></div>
<svg style="left:277px;top:184px" width="7" height="10" viewBox="0 0 7 10"><path d="M0 0 L6.5 5 L0 10Z" fill="#000"/></svg>
<div class="t" style="left:312px;top:154.00px;font-size:13px;color:#111;">ac</div>
<div class="t" style="left:294px;top:175.00px;font-size:13px;color:#fff;letter-spacing:-0.15px">Accurate Cleaning</div>
<div class="t" style="left:482px;top:175.00px;font-size:13px;color:#fff;letter-spacing:-0.15px">FC-5004</div>
<div class="t" style="left:628px;top:175.00px;font-size:13px;color:#fff;letter-spacing:-0.15px">FF</div>
<div class="t" style="left:756px;top:175.00px;font-size:13px;color:#fff;letter-spacing:-0.15px">942 Brooks Avenue</div>
<div class="t" style="left:756px;top:189.70px;font-size:13px;color:#fff;letter-spacing:-0.15px">Florham Park, NJ  07932</div>
<div class="t" style="left:981px;top:175.00px;font-size:13px;color:#fff;letter-spacing:-0.15px">Matt Payton</div>
<div class="t" style="left:1133px;top:175.00px;font-size:13px;color:#fff;letter-spacing:-0.15px">CHD</div>
<div class="t" style="left:1214px;top:175.00px;font-size:13px;color:#fff;letter-spacing:-0.15px">661-987-</div>
<div class="t" style="left:1214px;top:189.70px;font-size:13px;color:#fff;letter-spacing:-0.15px">9999</div>
<div class="t" style="left:1299px;top:175.00px;font-size:13px;color:#fff;letter-spacing:-0.15px">Mike Johnson</div>
<div class="t" style="left:1392px;top:175.00px;font-size:13px;color:#fff;letter-spacing:-0.15px">6</div>
<div class="t" style="left:1392px;top:189.70px;font-size:13px;color:#fff;letter-spacing:-0.15px">7</div>
<div class="t" style="left:294px;top:208.00px;font-size:13px;color:#111;letter-spacing:-0.15px">Ace Medical Supply</div>
<div class="t" style="left:482px;top:208.00px;font-size:13px;color:#111;letter-spacing:-0.15px">3010</div>
<div class="t" style="left:628px;top:208.00px;font-size:13px;color:#111;letter-spacing:-0.15px">mtc</div>
<div class="t" style="left:756px;top:208.00px;font-size:13px;color:#111;letter-spacing:-0.15px">158 Commercial Drive</div>
<div class="t" style="left:756px;top:222.70px;font-size:13px;color:#111;letter-spacing:-0.15px">PO Box 1234</div>
<div class="t" style="left:756px;top:237.40px;font-size:13px;color:#111;letter-spacing:-0.15px">Union, NJ  07083</div>
<div class="t" style="left:981px;top:208.00px;font-size:13px;color:#111;letter-spacing:-0.15px">Linda Smith</div>
<div class="t" style="left:1133px;top:208.00px;font-size:13px;color:#111;letter-spacing:-0.15px">CHD</div>
<div class="t" style="left:1214px;top:208.00px;font-size:13px;color:#111;letter-spacing:-0.15px">908-687-</div>
<div class="t" style="left:1214px;top:222.70px;font-size:13px;color:#111;letter-spacing:-0.15px">4355</div>
<div class="t" style="left:1299px;top:208.00px;font-size:13px;color:#111;letter-spacing:-0.15px">Debbie</div>
<div class="t" style="left:1299px;top:222.70px;font-size:13px;color:#111;letter-spacing:-0.15px">Layaway</div>
<div class="t" style="left:1392px;top:208.00px;font-size:13px;color:#111;letter-spacing:-0.15px">9</div>
<div class="t" style="left:1392px;top:222.70px;font-size:13px;color:#111;letter-spacing:-0.15px">4</div>
<div class="t" style="left:294px;top:256.00px;font-size:13px;color:#111;letter-spacing:-0.15px">Acid Products</div>
<div class="t" style="left:482px;top:256.00px;font-size:13px;color:#111;letter-spacing:-0.15px">ACIDP</div>
<div class="t" style="left:628px;top:256.00px;font-size:13px;color:#111;letter-spacing:-0.15px">mtc</div>
<div class="t" style="left:756px;top:256.00px;font-size:13px;color:#111;letter-spacing:-0.15px">500 W. 41st Street</div>
<div class="t" style="left:756px;top:270.70px;font-size:13px;color:#111;letter-spacing:-0.15px">Florham Park, NJ  454545</div>
<div class="t" style="left:981px;top:256.00px;font-size:13px;color:#111;letter-spacing:-0.15px">Lou</div>
<div class="t" style="left:1133px;top:256.00px;font-size:13px;color:#111;letter-spacing:-0.15px">CHD</div>
<div class="t" style="left:1214px;top:256.00px;font-size:13px;color:#111;letter-spacing:-0.15px">773-254-</div>
<div class="t" style="left:1214px;top:270.70px;font-size:13px;color:#111;letter-spacing:-0.15px">5222</div>
<div class="a" style="left:1393px;top:120px;width:2px;height:180px;background:#fff"></div>
<div class="a" style="left:270px;top:320px;width:1123px;height:16px;background:#f0f0f0"></div>
<div class="a" style="left:287px;top:320px;width:699px;height:16px;background:#cdcdcd"></div>
<svg style="left:275px;top:324px" width="8" height="9" viewBox="0 0 8 9"><path d="M6 1 L2 4.5 L6 8" fill="none" stroke="#333" stroke-width="1.6"/></svg>
<svg style="left:1381px;top:324px" width="8" height="9" viewBox="0 0 8 9"><path d="M2 1 L6 4.5 L2 8" fill="none" stroke="#333" stroke-width="1.6"/></svg>
<div class="a" style="left:1393px;top:120px;width:2px;height:217px;background:#fff"></div>
<div class="a" style="left:270px;top:336px;width:1125px;height:1px;background:#c8ccd4"></div>
<div class="a" style="left:270px;top:337px;width:1125px;height:5px;background:#fff"></div>
<div class="a" style="left:270px;top:342px;width:864px;height:21px;background:#fff"></div>
<div class="a" style="left:270px;top:342px;width:58px;height:21px;border:1px solid #c5cdd8;border-bottom:none;border-right:none;background:#fff"></div>
<div class="t" style="left:0px;top:345.80px;font-size:13px;color:#111;width:58px;text-align:center;left:270px;">Orders</div>
<div class="a" style="left:328px;top:342px;width:69px;height:21px;border:1px solid #c5cdd8;border-bottom:none;border-right:none;background:#fff"></div>
<div class="t" style="left:0px;top:345.80px;font-size:13px;color:#111;width:69px;text-align:center;left:328px;">Open AR</div>
<div class="a" style="left:397px;top:342px;width:141px;height:21px;border:1px solid #c5cdd8;border-bottom:none;border-right:none;background:#fff"></div>
<div class="t" style="left:0px;top:345.80px;font-size:13px;color:#111;width:141px;text-align:center;left:397px;">Invoices/CMs/DMs</div>
<div class="a" style="left:538px;top:342px;width:70px;height:21px;border:1px solid #c5cdd8;border-bottom:none;border-right:none;background:#fff"></div>
<div class="t" style="left:0px;top:345.80px;font-size:13px;color:#111;width:70px;text-align:center;left:538px;">Products</div>
<div class="a" style="left:608px;top:342px;width:70px;height:21px;border:1px solid #c5cdd8;border-bottom:none;border-right:none;background:#fff"></div>
<div class="t" style="left:0px;top:345.80px;font-size:13px;color:#111;width:70px;text-align:center;left:608px;">Contacts</div>
<div class="a" style="left:678px;top:342px;width:129px;height:21px;border:1px solid #c5cdd8;border-bottom:none;border-right:none;background:#fff"></div>
<div class="t" style="left:0px;top:345.80px;font-size:13px;color:#111;width:129px;text-align:center;left:678px;">Ship To Locations</div>
<div class="a" style="left:807px;top:342px;width:101px;height:22px;background:linear-gradient(180deg,#dde6f0,#c9d6e6)"></div>
<div class="t" style="left:0px;top:345.80px;font-size:13px;color:#111;font-weight:bold;width:101px;text-align:center;left:807px;">Sales History</div>
<div class="a" style="left:908px;top:342px;width:105px;height:21px;border:1px solid #c5cdd8;border-bottom:none;border-right:none;background:#fff"></div>
<div class="t" style="left:0px;top:345.80px;font-size:13px;color:#111;width:105px;text-align:center;left:908px;">Sales Analysis</div>
<div class="a" style="left:1013px;top:342px;width:120px;height:21px;border:1px solid #c5cdd8;border-bottom:none;border-right:none;background:#fff"></div>
<div class="t" style="left:0px;top:345.80px;font-size:13px;color:#111;width:120px;text-align:center;left:1013px;">AR Transactions</div>
<div class="a" style="left:1133px;top:342px;width:1px;height:21px;background:#c5cdd8"></div>
<svg style="left:1380px;top:351px" width="10" height="6" viewBox="0 0 10 6"><path d="M0 0 H10 L5 6Z" fill="#111"/></svg>
<div class="a" style="left:270px;top:363px;width:1125px;height:34px;background:linear-gradient(180deg,#c5d3e3 0%,#dfe7f0 35%,#fafcfe 85%,#fff 100%);border-top:1px solid #aebdd0"></div>
<div class="a" style="left:270px;top:396px;width:1125px;height:1px;background:#d8dde4"></div>
<svg style="left:277px;top:372px" width="100" height="20" viewBox="276 97 100 20"><defs><linearGradient id="ng" x1="0" y1="0" x2="0" y2="1"><stop offset="0" stop-color="#3d8ee8"/><stop offset="1" stop-color="#1553b8"/></linearGradient></defs><rect x="276" y="97" width="4" height="15" fill="url(#ng)"/><path d="M289 99.3 L283.8 104.5 L289 109.7" fill="none" stroke="url(#ng)" stroke-width="3.8" stroke-linecap="square"/><path d="M312 99.3 L306.8 104.5 L312 109.7" fill="none" stroke="url(#ng)" stroke-width="3.8" stroke-linecap="square"/><path d="M332 99.3 L337.2 104.5 L332 109.7" fill="none" stroke="url(#ng)" stroke-width="3.8" stroke-linecap="square"/><path d="M356 99.3 L361.2 104.5 L356 109.7" fill="none" stroke="url(#ng)" stroke-width="3.8" stroke-linecap="square"/><rect x="365" y="97" width="4" height="15" fill="url(#ng)"/></svg>
<div class="a" style="left:377px;top:367px;width:1px;height:27px;background:#b8c0cc"></div>
<div class="t" style="left:410px;top:374.00px;font-size:13px;color:#222;letter-spacing:-0.273px;">Last Refreshed: 12:23:03 PM</div>
<svg style="left:583px;top:372px" width="17" height="17" viewBox="0 0 16 16"><path d="M3 5.5 C4.5 1.5 9 0.5 12 3.5 L14.5 1.5 L15 8.5 L8.5 8 L10.5 6 C8.5 4 6 4 4.5 6.5 Z" fill="#79b8f2" stroke="#1e5cb0" stroke-width="0.9"/><path d="M13 10.5 C11.5 14.5 7 15.5 4 12.5 L1.5 14.5 L1 7.5 L7.5 8 L5.5 10 C7.5 12 10 12 11.5 9.5 Z" fill="#79b8f2" stroke="#1e5cb0" stroke-width="0.9"/></svg>
<div class="t" style="left:606px;top:374.00px;font-size:13px;color:#222;letter-spacing:-0.253px;">Refresh</div>
<div class="a" style="left:659px;top:367px;width:1px;height:27px;background:#b8c0cc"></div>
<div class="t" style="left:669px;top:375.00px;font-size:13px;color:#222;letter-spacing:-0.114px;">Current Layout:</div>
<div class="a" style="left:767px;top:367px;width:112px;height:25px;background:#fff"></div>
<div class="t" style="left:772px;top:374.00px;font-size:13px;color:#222;letter-spacing:-0.441px;">Last Used</div>
<div class="a" style="left:865px;top:371px;width:12px;height:18px;background:linear-gradient(180deg,#f0f0f0,#d4d4d4);border:1px solid #c8c8c8"></div>
<svg style="left:867px;top:378px" width="8" height="5" viewBox="0 0 8 5"><path d="M0 0 H8 L4 5Z" fill="#111"/></svg>
<div class="a" style="left:883px;top:367px;width:1px;height:27px;background:#c0c6d0"></div>
<div class="a" style="left:891px;top:373px;width:14px;height:13px;border:1px solid #333;background:#fff"></div>
<div class="t" style="left:916px;top:374.00px;font-size:13px;color:#222;letter-spacing:-0.138px;">Group Rows</div>
<div class="t" style="left:1000px;top:375.00px;font-size:13px;color:#222;letter-spacing:-0.348px;">Show :</div>
<div class="a" style="left:1045px;top:370px;width:99px;height:21px;border:1px solid #b8c0cc;background:#fff"></div>
<div class="t" style="left:1052px;top:374.00px;font-size:13px;color:#222;">Sales</div>
<div class="a" style="left:1126px;top:372px;width:16px;height:17px;border:1px solid #a0a8b4;background:linear-gradient(180deg,#f8f8f8,#e0e0e0)"></div>
<svg style="left:1129px;top:377px" width="10" height="7" viewBox="0 0 10 7"><path d="M1 1 L5 5 L9 1" fill="none" stroke="#555" stroke-width="1.4"/></svg>
<div class="a" style="left:270px;top:397px;width:1123px;height:2px;background:#fff"></div>
<div class="a" style="left:270px;top:398px;width:1123px;height:1px;background:#b4bcc8"></div>
<div class="a" style="left:270px;top:400px;width:20px;height:22px;background:#a8b0bc"></div>
<div class="a" style="left:272px;top:402px;width:16px;height:18px;background:linear-gradient(180deg,#f2f2f2,#e0e0e0)"></div>
<svg style="left:274px;top:402px" width="14" height="16" viewBox="0 0 14 16"><rect x="5" y="1" width="7" height="4" fill="#c8c8f0" stroke="#333" stroke-width="0.8"/><rect x="1" y="5" width="7" height="4" fill="#fff" stroke="#333" stroke-width="0.8"/><rect x="1" y="9" width="7" height="4" fill="#fff" stroke="#333" stroke-width="0.8"/><path d="M5 9 L11 3" stroke="#111" stroke-width="1.2"/><path d="M8 7 H13" stroke="#111" stroke-width="1"/></svg>
<div class="a" style="left:290px;top:400px;width:101px;height:22px;background:#a8b9d1"></div>
<div class="a" style="left:290px;top:423px;width:101px;height:18px;background:#fbf8d6"></div>
<div class="a" style="left:290px;top:442px;width:101px;height:16px;background:#00309b"></div>
<div class="a" style="left:290px;top:459px;width:101px;height:16px;background:#b5cde5"></div>
<div class="a" style="left:290px;top:476px;width:101px;height:16px;background:#d9e5f1"></div>
<div class="t" style="left:295px;top:404.84px;font-size:12px;color:#111;letter-spacing:-0.3px">Fiscal Year</div>
<svg style="left:368px;top:405px" width="9" height="7" viewBox="0 0 9 7"><path d="M4.5 0.8 L8 6.2 H1Z" fill="none" stroke="#fff" stroke-width="1.1"/></svg>
<svg style="left:378px;top:407px" width="10" height="8" viewBox="0 0 10 8"><path d="M0 3.5 H3.5 M3.5 0 V7" fill="none" stroke="#111" stroke-width="1.2"/><rect x="4" y="1.3" width="4.6" height="4.4" fill="#eef0f4" stroke="#111" stroke-width="1.1"/></svg>
<svg style="left:294px;top:425px" width="12" height="12" viewBox="0 0 12 12"><rect x="0.5" y="0.5" width="11" height="11" fill="#fff" stroke="#555"/><rect x="3" y="3" width="6" height="6" fill="#6a6ac8"/></svg>
<div class="t" style="left:313px;top:424.34px;font-size:12px;color:#111;letter-spacing:-0.3px">200</div>
<div class="t" style="left:295px;top:443.84px;font-size:12px;color:#fff;letter-spacing:-0.28px">Fiscal 2004</div>
<div class="t" style="left:295px;top:460.34px;font-size:12px;color:#111;letter-spacing:-0.28px">Fiscal 2005</div>
<div class="t" style="left:295px;top:477.34px;font-size:12px;color:#111;letter-spacing:-0.28px">Fiscal 2006</div>
<div class="a" style="left:392px;top:400px;width:82px;height:22px;background:#a8b9d1"></div>
<div class="a" style="left:392px;top:423px;width:82px;height:18px;background:#fbf8d6"></div>
<div class="a" style="left:392px;top:442px;width:82px;height:16px;background:#00309b"></div>
<div class="a" style="left:392px;top:459px;width:82px;height:16px;background:#b5cde5"></div>
<div class="a" style="left:392px;top:476px;width:82px;height:16px;background:#d9e5f1"></div>
<div class="t" style="left:397px;top:404.84px;font-size:12px;color:#111;letter-spacing:-0.3px">January</div>
<svg style="left:450px;top:405px" width="24" height="13" viewBox="0 0 24 13"><path d="M8.5 1.2 H1.5 L5.5 6.5 L1.5 11.8 H8.5" fill="none" stroke="#111" stroke-width="2"/></svg>
<svg style="left:462px;top:408px" width="10" height="8" viewBox="0 0 10 8"><path d="M0 3.5 H3.5 M3.5 0 V7" fill="none" stroke="#111" stroke-width="1.2"/><rect x="4" y="1.3" width="4.6" height="4.4" fill="#eef0f4" stroke="#111" stroke-width="1.1"/></svg>
<svg style="left:396px;top:428px" width="10" height="8" viewBox="0 0 10 8"><path d="M1 2.5 H9 M1 5.5 H9" stroke="#444" stroke-width="1"/></svg>
<div class="a" style="left:409px;top:424px;width:1px;height:16px;background:#999"></div>
<div class="t" style="left:0px;top:443.84px;font-size:12px;color:#fff;width:80px;text-align:right;left:392.5px;letter-spacing:-0.5px;">0</div>
<div class="t" style="left:0px;top:460.34px;font-size:12px;color:#111;width:80px;text-align:right;left:392.5px;letter-spacing:-0.5px;">79,326</div>
<div class="t" style="left:0px;top:477.34px;font-size:12px;color:#111;width:80px;text-align:right;left:392.5px;letter-spacing:-0.5px;">0</div>
<div class="a" style="left:475px;top:400px;width:88px;height:22px;background:#a8b9d1"></div>
<div class="a" style="left:475px;top:423px;width:88px;height:18px;background:#fbf8d6"></div>
<div class="a" style="left:475px;top:442px;width:88px;height:16px;background:#00309b"></div>
<div class="a" style="left:475px;top:459px;width:88px;height:16px;background:#b5cde5"></div>
<div class="a" style="left:475px;top:476px;width:88px;height:16px;background:#d9e5f1"></div>
<div class="t" style="left:480px;top:404.84px;font-size:12px;color:#111;letter-spacing:-0.3px">February</div>
<svg style="left:539px;top:405px" width="24" height="13" viewBox="0 0 24 13"><path d="M8.5 1.2 H1.5 L5.5 6.5 L1.5 11.8 H8.5" fill="none" stroke="#111" stroke-width="2"/></svg>
<svg style="left:551px;top:408px" width="10" height="8" viewBox="0 0 10 8"><path d="M0 3.5 H3.5 M3.5 0 V7" fill="none" stroke="#111" stroke-width="1.2"/><rect x="4" y="1.3" width="4.6" height="4.4" fill="#eef0f4" stroke="#111" stroke-width="1.1"/></svg>
<svg style="left:479px;top:428px" width="10" height="8" viewBox="0 0 10 8"><path d="M1 2.5 H9 M1 5.5 H9" stroke="#444" stroke-width="1"/></svg>
<div class="a" style="left:492px;top:424px;width:1px;height:16px;background:#999"></div>
<div class="t" style="left:0px;top:443.84px;font-size:12px;color:#fff;width:80px;text-align:right;left:481.5px;letter-spacing:-0.5px;">0</div>
<div class="t" style="left:0px;top:460.34px;font-size:12px;color:#111;width:80px;text-align:right;left:481.5px;letter-spacing:-0.5px;">63,530</div>
<div class="t" style="left:0px;top:477.34px;font-size:12px;color:#111;width:80px;text-align:right;left:481.5px;letter-spacing:-0.5px;">0</div>
<div class="a" style="left:564px;top:400px;width:79px;height:22px;background:#a8b9d1"></div>
<div class="a" style="left:564px;top:423px;width:79px;height:18px;background:#fbf8d6"></div>
<div class="a" style="left:564px;top:442px;width:79px;height:16px;background:#00309b"></div>
<div class="a" style="left:564px;top:459px;width:79px;height:16px;background:#b5cde5"></div>
<div class="a" style="left:564px;top:476px;width:79px;height:16px;background:#d9e5f1"></div>
<div class="t" style="left:569px;top:404.84px;font-size:12px;color:#111;letter-spacing:-0.3px">March</div>
<svg style="left:619px;top:405px" width="24" height="13" viewBox="0 0 24 13"><path d="M8.5 1.2 H1.5 L5.5 6.5 L1.5 11.8 H8.5" fill="none" stroke="#111" stroke-width="2"/></svg>
<svg style="left:631px;top:408px" width="10" height="8" viewBox="0 0 10 8"><path d="M0 3.5 H3.5 M3.5 0 V7" fill="none" stroke="#111" stroke-width="1.2"/><rect x="4" y="1.3" width="4.6" height="4.4" fill="#eef0f4" stroke="#111" stroke-width="1.1"/></svg>
<svg style="left:568px;top:428px" width="10" height="8" viewBox="0 0 10 8"><path d="M1 2.5 H9 M1 5.5 H9" stroke="#444" stroke-width="1"/></svg>
<div class="a" style="left:581px;top:424px;width:1px;height:16px;background:#999"></div>
<div class="t" style="left:0px;top:443.84px;font-size:12px;color:#fff;width:80px;text-align:right;left:561.5px;letter-spacing:-0.5px;">0</div>
<div class="t" style="left:0px;top:460.34px;font-size:12px;color:#111;width:80px;text-align:right;left:561.5px;letter-spacing:-0.5px;">43,460</div>
<div class="t" style="left:0px;top:477.34px;font-size:12px;color:#111;width:80px;text-align:right;left:561.5px;letter-spacing:-0.5px;">0</div>
<div class="a" style="left:644px;top:400px;width:79px;height:22px;background:#a8b9d1"></div>
<div class="a" style="left:644px;top:423px;width:79px;height:18px;background:#fbf8d6"></div>
<div class="a" style="left:644px;top:442px;width:79px;height:16px;background:#00309b"></div>
<div class="a" style="left:644px;top:459px;width:79px;height:16px;background:#b5cde5"></div>
<div class="a" style="left:644px;top:476px;width:79px;height:16px;background:#d9e5f1"></div>
<div class="t" style="left:649px;top:404.84px;font-size:12px;color:#111;letter-spacing:-0.3px">April</div>
<svg style="left:699px;top:405px" width="24" height="13" viewBox="0 0 24 13"><path d="M8.5 1.2 H1.5 L5.5 6.5 L1.5 11.8 H8.5" fill="none" stroke="#111" stroke-width="2"/></svg>
<svg style="left:711px;top:408px" width="10" height="8" viewBox="0 0 10 8"><path d="M0 3.5 H3.5 M3.5 0 V7" fill="none" stroke="#111" stroke-width="1.2"/><rect x="4" y="1.3" width="4.6" height="4.4" fill="#eef0f4" stroke="#111" stroke-width="1.1"/></svg>
<svg style="left:648px;top:428px" width="10" height="8" viewBox="0 0 10 8"><path d="M1 2.5 H9 M1 5.5 H9" stroke="#444" stroke-width="1"/></svg>
<div class="a" style="left:661px;top:424px;width:1px;height:16px;background:#999"></div>
<div class="t" style="left:0px;top:443.84px;font-size:12px;color:#fff;width:80px;text-align:right;left:641.5px;letter-spacing:-0.5px;">0</div>
<div class="t" style="left:0px;top:460.34px;font-size:12px;color:#111;width:80px;text-align:right;left:641.5px;letter-spacing:-0.5px;">117,540</div>
<div class="t" style="left:0px;top:477.34px;font-size:12px;color:#111;width:80px;text-align:right;left:641.5px;letter-spacing:-0.5px;">0</div>
<div class="a" style="left:724px;top:400px;width:79px;height:22px;background:#a8b9d1"></div>
<div class="a" style="left:724px;top:423px;width:79px;height:18px;background:#fbf8d6"></div>
<div class="a" style="left:724px;top:442px;width:79px;height:16px;background:#00309b"></div>
<div class="a" style="left:724px;top:459px;width:79px;height:16px;background:#b5cde5"></div>
<div class="a" style="left:724px;top:476px;width:79px;height:16px;background:#d9e5f1"></div>
<div class="t" style="left:729px;top:404.84px;font-size:12px;color:#111;letter-spacing:-0.3px">May</div>
<svg style="left:779px;top:405px" width="24" height="13" viewBox="0 0 24 13"><path d="M8.5 1.2 H1.5 L5.5 6.5 L1.5 11.8 H8.5" fill="none" stroke="#111" stroke-width="2"/></svg>
<svg style="left:791px;top:408px" width="10" height="8" viewBox="0 0 10 8"><path d="M0 3.5 H3.5 M3.5 0 V7" fill="none" stroke="#111" stroke-width="1.2"/><rect x="4" y="1.3" width="4.6" height="4.4" fill="#eef0f4" stroke="#111" stroke-width="1.1"/></svg>
<svg style="left:728px;top:428px" width="10" height="8" viewBox="0 0 10 8"><path d="M1 2.5 H9 M1 5.5 H9" stroke="#444" stroke-width="1"/></svg>
<div class="a" style="left:741px;top:424px;width:1px;height:16px;background:#999"></div>
<div class="t" style="left:0px;top:443.84px;font-size:12px;color:#fff;width:80px;text-align:right;left:721.5px;letter-spacing:-0.5px;">0</div>
<div class="t" style="left:0px;top:460.34px;font-size:12px;color:#111;width:80px;text-align:right;left:721.5px;letter-spacing:-0.5px;">29,060</div>
<div class="t" style="left:0px;top:477.34px;font-size:12px;color:#111;width:80px;text-align:right;left:721.5px;letter-spacing:-0.5px;">15,026</div>
<div class="a" style="left:804px;top:400px;width:79px;height:22px;background:#a8b9d1"></div>
<div class="a" style="left:804px;top:423px;width:79px;height:18px;background:#fbf8d6"></div>
<div class="a" style="left:804px;top:442px;width:79px;height:16px;background:#00309b"></div>
<div class="a" style="left:804px;top:459px;width:79px;height:16px;background:#b5cde5"></div>
<div class="a" style="left:804px;top:476px;width:79px;height:16px;background:#d9e5f1"></div>
<div class="t" style="left:809px;top:404.84px;font-size:12px;color:#111;letter-spacing:-0.3px">June</div>
<svg style="left:859px;top:405px" width="24" height="13" viewBox="0 0 24 13"><path d="M8.5 1.2 H1.5 L5.5 6.5 L1.5 11.8 H8.5" fill="none" stroke="#111" stroke-width="2"/></svg>
<svg style="left:871px;top:408px" width="10" height="8" viewBox="0 0 10 8"><path d="M0 3.5 H3.5 M3.5 0 V7" fill="none" stroke="#111" stroke-width="1.2"/><rect x="4" y="1.3" width="4.6" height="4.4" fill="#eef0f4" stroke="#111" stroke-width="1.1"/></svg>
<svg style="left:808px;top:428px" width="10" height="8" viewBox="0 0 10 8"><path d="M1 2.5 H9 M1 5.5 H9" stroke="#444" stroke-width="1"/></svg>
<div class="a" style="left:821px;top:424px;width:1px;height:16px;background:#999"></div>
<div class="t" style="left:0px;top:443.84px;font-size:12px;color:#fff;width:80px;text-align:right;left:801.5px;letter-spacing:-0.5px;">0</div>
<div class="t" style="left:0px;top:460.34px;font-size:12px;color:#111;width:80px;text-align:right;left:801.5px;letter-spacing:-0.5px;">98,200</div>
<div class="t" style="left:0px;top:477.34px;font-size:12px;color:#111;width:80px;text-align:right;left:801.5px;letter-spacing:-0.5px;">0</div>
<div class="a" style="left:884px;top:400px;width:78px;height:22px;background:#a8b9d1"></div>
<div class="a" style="left:884px;top:423px;width:78px;height:18px;background:#fbf8d6"></div>
<div class="a" style="left:884px;top:442px;width:78px;height:16px;background:#00309b"></div>
<div class="a" style="left:884px;top:459px;width:78px;height:16px;background:#b5cde5"></div>
<div class="a" style="left:884px;top:476px;width:78px;height:16px;background:#d9e5f1"></div>
<div class="t" style="left:889px;top:404.84px;font-size:12px;color:#111;letter-spacing:-0.3px">July</div>
<svg style="left:938px;top:405px" width="24" height="13" viewBox="0 0 24 13"><path d="M8.5 1.2 H1.5 L5.5 6.5 L1.5 11.8 H8.5" fill="none" stroke="#111" stroke-width="2"/></svg>
<svg style="left:950px;top:408px" width="10" height="8" viewBox="0 0 10 8"><path d="M0 3.5 H3.5 M3.5 0 V7" fill="none" stroke="#111" stroke-width="1.2"/><rect x="4" y="1.3" width="4.6" height="4.4" fill="#eef0f4" stroke="#111" stroke-width="1.1"/></svg>
<svg style="left:888px;top:428px" width="10" height="8" viewBox="0 0 10 8"><path d="M1 2.5 H9 M1 5.5 H9" stroke="#444" stroke-width="1"/></svg>
<div class="a" style="left:901px;top:424px;width:1px;height:16px;background:#999"></div>
<div class="t" style="left:0px;top:443.84px;font-size:12px;color:#fff;width:80px;text-align:right;left:880.5px;letter-spacing:-0.5px;">0</div>
<div class="t" style="left:0px;top:460.34px;font-size:12px;color:#111;width:80px;text-align:right;left:880.5px;letter-spacing:-0.5px;">50,000</div>
<div class="t" style="left:0px;top:477.34px;font-size:12px;color:#111;width:80px;text-align:right;left:880.5px;letter-spacing:-0.5px;">0</div>
<div class="a" style="left:963px;top:400px;width:80px;height:22px;background:#a8b9d1"></div>
<div class="a" style="left:963px;top:423px;width:80px;height:18px;background:#fbf8d6"></div>
<div class="a" style="left:963px;top:442px;width:80px;height:16px;background:#00309b"></div>
<div class="a" style="left:963px;top:459px;width:80px;height:16px;background:#b5cde5"></div>
<div class="a" style="left:963px;top:476px;width:80px;height:16px;background:#d9e5f1"></div>
<div class="t" style="left:968px;top:404.84px;font-size:12px;color:#111;letter-spacing:-0.3px">August</div>
<svg style="left:1019px;top:405px" width="24" height="13" viewBox="0 0 24 13"><path d="M8.5 1.2 H1.5 L5.5 6.5 L1.5 11.8 H8.5" fill="none" stroke="#111" stroke-width="2"/></svg>
<svg style="left:1031px;top:408px" width="10" height="8" viewBox="0 0 10 8"><path d="M0 3.5 H3.5 M3.5 0 V7" fill="none" stroke="#111" stroke-width="1.2"/><rect x="4" y="1.3" width="4.6" height="4.4" fill="#eef0f4" stroke="#111" stroke-width="1.1"/></svg>
<svg style="left:967px;top:428px" width="10" height="8" viewBox="0 0 10 8"><path d="M1 2.5 H9 M1 5.5 H9" stroke="#444" stroke-width="1"/></svg>
<div class="a" style="left:980px;top:424px;width:1px;height:16px;background:#999"></div>
<div class="t" style="left:0px;top:443.84px;font-size:12px;color:#fff;width:80px;text-align:right;left:961.5px;letter-spacing:-0.5px;">0</div>
<div class="t" style="left:0px;top:460.34px;font-size:12px;color:#111;width:80px;text-align:right;left:961.5px;letter-spacing:-0.5px;">87,550</div>
<div class="t" style="left:0px;top:477.34px;font-size:12px;color:#111;width:80px;text-align:right;left:961.5px;letter-spacing:-0.5px;">0</div>
<div class="a" style="left:1044px;top:400px;width:100px;height:22px;background:#a8b9d1"></div>
<div class="a" style="left:1044px;top:423px;width:100px;height:18px;background:#fbf8d6"></div>
<div class="a" style="left:1044px;top:442px;width:100px;height:16px;background:#00309b"></div>
<div class="a" style="left:1044px;top:459px;width:100px;height:16px;background:#b5cde5"></div>
<div class="a" style="left:1044px;top:476px;width:100px;height:16px;background:#d9e5f1"></div>
<div class="t" style="left:1049px;top:404.84px;font-size:12px;color:#111;letter-spacing:-0.3px">September</div>
<svg style="left:1120px;top:405px" width="24" height="13" viewBox="0 0 24 13"><path d="M8.5 1.2 H1.5 L5.5 6.5 L1.5 11.8 H8.5" fill="none" stroke="#111" stroke-width="2"/></svg>
<svg style="left:1132px;top:408px" width="10" height="8" viewBox="0 0 10 8"><path d="M0 3.5 H3.5 M3.5 0 V7" fill="none" stroke="#111" stroke-width="1.2"/><rect x="4" y="1.3" width="4.6" height="4.4" fill="#eef0f4" stroke="#111" stroke-width="1.1"/></svg>
<svg style="left:1048px;top:428px" width="10" height="8" viewBox="0 0 10 8"><path d="M1 2.5 H9 M1 5.5 H9" stroke="#444" stroke-width="1"/></svg>
<div class="a" style="left:1061px;top:424px;width:1px;height:16px;background:#999"></div>
<div class="t" style="left:0px;top:443.84px;font-size:12px;color:#fff;width:80px;text-align:right;left:1062.5px;letter-spacing:-0.5px;">0</div>
<div class="t" style="left:0px;top:460.34px;font-size:12px;color:#111;width:80px;text-align:right;left:1062.5px;letter-spacing:-0.5px;">0</div>
<div class="t" style="left:0px;top:477.34px;font-size:12px;color:#111;width:80px;text-align:right;left:1062.5px;letter-spacing:-0.5px;">4,950</div>
<div class="a" style="left:1145px;top:400px;width:82px;height:22px;background:#a8b9d1"></div>
<div class="a" style="left:1145px;top:423px;width:82px;height:18px;background:#fbf8d6"></div>
<div class="a" style="left:1145px;top:442px;width:82px;height:16px;background:#00309b"></div>
<div class="a" style="left:1145px;top:459px;width:82px;height:16px;background:#b5cde5"></div>
<div class="a" style="left:1145px;top:476px;width:82px;height:16px;background:#d9e5f1"></div>
<div class="t" style="left:1150px;top:404.84px;font-size:12px;color:#111;letter-spacing:-0.3px">October</div>
<svg style="left:1203px;top:405px" width="24" height="13" viewBox="0 0 24 13"><path d="M8.5 1.2 H1.5 L5.5 6.5 L1.5 11.8 H8.5" fill="none" stroke="#111" stroke-width="2"/></svg>
<svg style="left:1215px;top:408px" width="10" height="8" viewBox="0 0 10 8"><path d="M0 3.5 H3.5 M3.5 0 V7" fill="none" stroke="#111" stroke-width="1.2"/><rect x="4" y="1.3" width="4.6" height="4.4" fill="#eef0f4" stroke="#111" stroke-width="1.1"/></svg>
<svg style="left:1149px;top:428px" width="10" height="8" viewBox="0 0 10 8"><path d="M1 2.5 H9 M1 5.5 H9" stroke="#444" stroke-width="1"/></svg>
<div class="a" style="left:1162px;top:424px;width:1px;height:16px;background:#999"></div>
<div class="t" style="left:0px;top:443.84px;font-size:12px;color:#fff;width:80px;text-align:right;left:1145.5px;letter-spacing:-0.5px;">0</div>
<div class="t" style="left:0px;top:460.34px;font-size:12px;color:#111;width:80px;text-align:right;left:1145.5px;letter-spacing:-0.5px;">108,300</div>
<div class="t" style="left:0px;top:477.34px;font-size:12px;color:#111;width:80px;text-align:right;left:1145.5px;letter-spacing:-0.5px;">193,200</div>
<div class="a" style="left:1228px;top:400px;width:98px;height:22px;background:#a8b9d1"></div>
<div class="a" style="left:1228px;top:423px;width:98px;height:18px;background:#fbf8d6"></div>
<div class="a" style="left:1228px;top:442px;width:98px;height:16px;background:#00309b"></div>
<div class="a" style="left:1228px;top:459px;width:98px;height:16px;background:#b5cde5"></div>
<div class="a" style="left:1228px;top:476px;width:98px;height:16px;background:#d9e5f1"></div>
<div class="t" style="left:1233px;top:404.84px;font-size:12px;color:#111;letter-spacing:-0.3px">November</div>
<svg style="left:1302px;top:405px" width="24" height="13" viewBox="0 0 24 13"><path d="M8.5 1.2 H1.5 L5.5 6.5 L1.5 11.8 H8.5" fill="none" stroke="#111" stroke-width="2"/></svg>
<svg style="left:1314px;top:408px" width="10" height="8" viewBox="0 0 10 8"><path d="M0 3.5 H3.5 M3.5 0 V7" fill="none" stroke="#111" stroke-width="1.2"/><rect x="4" y="1.3" width="4.6" height="4.4" fill="#eef0f4" stroke="#111" stroke-width="1.1"/></svg>
<svg style="left:1232px;top:428px" width="10" height="8" viewBox="0 0 10 8"><path d="M1 2.5 H9 M1 5.5 H9" stroke="#444" stroke-width="1"/></svg>
<div class="a" style="left:1245px;top:424px;width:1px;height:16px;background:#999"></div>
<div class="t" style="left:0px;top:443.84px;font-size:12px;color:#fff;width:80px;text-align:right;left:1244.5px;letter-spacing:-0.5px;">4,050</div>
<div class="t" style="left:0px;top:460.34px;font-size:12px;color:#111;width:80px;text-align:right;left:1244.5px;letter-spacing:-0.5px;">54,000</div>
<div class="t" style="left:0px;top:477.34px;font-size:12px;color:#111;width:80px;text-align:right;left:1244.5px;letter-spacing:-0.5px;">22,580</div>
<div class="a" style="left:1327px;top:400px;width:66px;height:22px;background:#a8b9d1"></div>
<div class="a" style="left:1327px;top:423px;width:66px;height:18px;background:#fbf8d6"></div>
<div class="a" style="left:1327px;top:442px;width:66px;height:16px;background:#00309b"></div>
<div class="a" style="left:1327px;top:459px;width:66px;height:16px;background:#b5cde5"></div>
<div class="a" style="left:1327px;top:476px;width:66px;height:16px;background:#d9e5f1"></div>
<div class="t" style="left:1332px;top:404.84px;font-size:12px;color:#111;letter-spacing:-0.3px">December</div>
<svg style="left:1331px;top:428px" width="10" height="8" viewBox="0 0 10 8"><path d="M1 2.5 H9 M1 5.5 H9" stroke="#444" stroke-width="1"/></svg>
<div class="a" style="left:1344px;top:424px;width:1px;height:16px;background:#999"></div>
<div class="t" style="left:1380px;top:477.34px;font-size:12px;color:#111;">19</div>
<div class="a" style="left:270px;top:423px;width:20px;height:18px;background:#fff"></div>
<div class="a" style="left:271px;top:424px;width:18px;height:17px;background:#e9e9ea;border:1px solid #c0c0c0"></div>
<svg style="left:274px;top:426px" width="13" height="13" viewBox="0 0 13 13"><rect x="1" y="1" width="11" height="11" fill="#d8d8f0" stroke="#222" stroke-width="1.3"/><path d="M1 12 L12 1 M6 12 L12 6" stroke="#222" stroke-width="1.2"/></svg>
<div class="a" style="left:270px;top:442px;width:20px;height:50px;background:#fafafa"></div>
<div class="a" style="left:289px;top:442px;width:1px;height:50px;background:#d8d8d8"></div>
<div class="a" style="left:270px;top:458px;width:20px;height:1px;background:#dcdcdc"></div>
<div class="a" style="left:270px;top:475px;width:20px;height:1px;background:#dcdcdc"></div>
<div class="a" style="left:270px;top:491px;width:20px;height:1px;background:#dcdcdc"></div>
<svg style="left:278px;top:445px" width="6" height="9" viewBox="0 0 6 9"><path d="M0 0 L5.5 4.5 L0 9Z" fill="#000"/></svg>
<div class="a" style="left:1393px;top:398px;width:2px;height:100px;background:#fff"></div>
<div class="a" style="left:270px;top:512px;width:1123px;height:16px;background:#f0f0f0"></div>
<div class="a" style="left:287px;top:512px;width:972px;height:16px;background:#cdcdcd"></div>
<svg style="left:275px;top:516px" width="8" height="9" viewBox="0 0 8 9"><path d="M6 1 L2 4.5 L6 8" fill="none" stroke="#333" stroke-width="1.6"/></svg>
<svg style="left:1381px;top:516px" width="8" height="9" viewBox="0 0 8 9"><path d="M2 1 L6 4.5 L2 8" fill="none" stroke="#333" stroke-width="1.6"/></svg>
<div class="a" style="left:270px;top:528px;width:1125px;height:1px;background:#c8ccd4"></div>
<div class="a" style="left:270px;top:529px;width:1125px;height:6px;background:#fafbfc"></div>
<div class="a" style="left:270px;top:535px;width:1125px;height:35px;background:linear-gradient(180deg,#d2dbe7 0%,#e2e8f0 45%,#f1f4f8 85%,#f8f9fb 100%)"></div>
<div class="t" style="left:272px;top:546.00px;font-size:13px;color:#111;letter-spacing:-0.210px;">Accurate Cleaning  (FC-5004)</div>
<div class="a" style="left:270px;top:570px;width:1125px;height:272px;background:#eef5fd;border:1px solid #000"></div>
<div class="a" style="left:0px;top:842px;width:1405px;height:10px;background:#f3f2ee"></div>
<div class="a" style="left:0px;top:842px;width:265px;height:1px;background:#cfcfcf"></div>
<div class="a" style="left:1317px;top:846px;width:88px;height:6px;border-top:1px solid #c4c4bc;border-left:1px solid #c4c4bc;background:#f6f5f2"></div>
<svg style="left:270px;top:570px" width="1124" height="271" viewBox="0 0 1124 271"><g><polygon points="360.67,104.61 840.53,159.24 880.32,43.70 336.33,5.10" fill="#efe6cc" /><line x1="357.38" y1="91.14" x2="845.79" y2="143.95" stroke="#f6f0de" stroke-width="1"/><line x1="354.20" y1="78.13" x2="850.92" y2="129.06" stroke="#f6f0de" stroke-width="1"/><line x1="350.91" y1="64.71" x2="856.24" y2="113.61" stroke="#f6f0de" stroke-width="1"/><line x1="347.53" y1="50.88" x2="861.77" y2="97.57" stroke="#f6f0de" stroke-width="1"/><line x1="344.03" y1="36.60" x2="867.51" y2="80.91" stroke="#f6f0de" stroke-width="1"/><line x1="340.43" y1="21.87" x2="873.47" y2="63.58" stroke="#f6f0de" stroke-width="1"/><line x1="336.71" y1="6.65" x2="879.68" y2="45.55" stroke="#f6f0de" stroke-width="1"/><line x1="394.02" y1="107.59" x2="373.45" y2="7.74" stroke="#f4eedb" stroke-width="1"/><line x1="428.57" y1="111.51" x2="411.81" y2="10.46" stroke="#f4eedb" stroke-width="1"/><line x1="464.17" y1="115.55" x2="451.48" y2="13.28" stroke="#f4eedb" stroke-width="1"/><line x1="500.87" y1="119.71" x2="492.53" y2="16.19" stroke="#f4eedb" stroke-width="1"/><line x1="538.71" y1="124.01" x2="535.02" y2="19.20" stroke="#f4eedb" stroke-width="1"/><line x1="577.76" y1="128.44" x2="579.04" y2="22.33" stroke="#f4eedb" stroke-width="1"/><line x1="618.06" y1="133.02" x2="624.67" y2="25.56" stroke="#f4eedb" stroke-width="1"/><line x1="659.70" y1="137.74" x2="671.99" y2="28.92" stroke="#f4eedb" stroke-width="1"/><line x1="702.72" y1="142.63" x2="721.11" y2="32.41" stroke="#f4eedb" stroke-width="1"/><line x1="747.20" y1="147.67" x2="772.13" y2="36.03" stroke="#f4eedb" stroke-width="1"/><line x1="793.22" y1="152.90" x2="825.16" y2="39.79" stroke="#f4eedb" stroke-width="1"/><line x1="336.33" y1="5.10" x2="880.32" y2="43.70" stroke="#ded5bd" stroke-width="1.2"/><polygon points="280.19,173.42 360.98,105.85 336.20,4.59 235.23,51.86" fill="#e4dcc6" /><polygon points="282.15,166.19 360.06,102.11 336.83,7.17 241.13,53.46" fill="#a8a090" /><line x1="277.55" y1="153.55" x2="357.38" y2="91.14" stroke="#e8e2d2" stroke-width="1.1"/><line x1="272.06" y1="138.44" x2="354.20" y2="78.13" stroke="#e8e2d2" stroke-width="1.1"/><line x1="266.35" y1="122.76" x2="350.91" y2="64.71" stroke="#e8e2d2" stroke-width="1.1"/><line x1="260.42" y1="106.46" x2="347.53" y2="50.88" stroke="#e8e2d2" stroke-width="1.1"/><line x1="254.25" y1="89.50" x2="344.03" y2="36.60" stroke="#e8e2d2" stroke-width="1.1"/><line x1="247.82" y1="71.85" x2="340.43" y2="21.87" stroke="#e8e2d2" stroke-width="1.1"/><line x1="312.37" y1="141.34" x2="279.01" y2="35.58" stroke="#e8e2d2" stroke-width="1.1"/><line x1="337.87" y1="120.37" x2="310.16" y2="20.28" stroke="#e8e2d2" stroke-width="1.1"/><polygon points="281.71,171.83 892.11,262.48 893.25,260.06 280.92,169.69" fill="#d8d0b8" /><polygon points="892.11,262.48 841.57,160.58 842.30,158.47 893.25,260.06" fill="#d4ccb4" /><polygon points="280.92,169.69 893.25,260.06 842.30,158.47 360.47,103.78" fill="#e3dcc5" /><line x1="281.89" y1="168.89" x2="360.47" y2="103.78" stroke="#ece6d4" stroke-width="1"/><line x1="322.35" y1="174.85" x2="394.02" y2="107.59" stroke="#ece6d4" stroke-width="1"/><line x1="364.34" y1="181.02" x2="428.57" y2="111.51" stroke="#ece6d4" stroke-width="1"/><line x1="407.92" y1="187.44" x2="464.17" y2="115.55" stroke="#ece6d4" stroke-width="1"/><line x1="453.21" y1="194.10" x2="500.87" y2="119.71" stroke="#ece6d4" stroke-width="1"/><line x1="500.29" y1="201.03" x2="538.71" y2="124.01" stroke="#ece6d4" stroke-width="1"/><line x1="549.28" y1="208.24" x2="577.76" y2="128.44" stroke="#ece6d4" stroke-width="1"/><line x1="600.29" y1="215.75" x2="618.06" y2="133.02" stroke="#ece6d4" stroke-width="1"/><line x1="653.46" y1="223.57" x2="659.70" y2="137.74" stroke="#ece6d4" stroke-width="1"/><line x1="708.92" y1="231.73" x2="702.72" y2="142.63" stroke="#ece6d4" stroke-width="1"/><line x1="766.83" y1="240.25" x2="747.20" y2="147.67" stroke="#ece6d4" stroke-width="1"/><line x1="827.34" y1="249.16" x2="793.22" y2="152.90" stroke="#ece6d4" stroke-width="1"/><line x1="890.65" y1="258.48" x2="840.85" y2="158.30" stroke="#ece6d4" stroke-width="1"/><line x1="283.49" y1="167.57" x2="889.59" y2="256.33" stroke="#ece6d4" stroke-width="1"/><line x1="312.95" y1="143.16" x2="870.34" y2="217.61" stroke="#ece6d4" stroke-width="1"/><line x1="338.35" y1="122.11" x2="854.34" y2="185.45" stroke="#ece6d4" stroke-width="1"/><line x1="360.47" y1="103.78" x2="840.85" y2="158.30" stroke="#ece6d4" stroke-width="1"/><polygon points="344.16,120.50 372.43,123.94 388.69,108.89 361.70,105.80" fill="#5f89ba" /><polygon points="379.61,124.82 408.78,128.37 423.34,112.85 395.54,109.67" fill="#5f89ba" /><polygon points="349.40,145.38 368.10,128.06 359.26,91.61 339.12,107.47" fill="#117070" /><polygon points="319.35,141.40 349.40,145.38 339.12,107.47 307.83,103.83" fill="#1b9393" /><polygon points="307.83,103.83 339.12,107.47 359.26,91.61 329.51,88.39" fill="#167b79" /><line x1="307.83" y1="103.83" x2="339.12" y2="107.47" stroke="#43bcbc" stroke-width="1.3"/><polygon points="416.19,129.27 446.30,132.93 459.05,116.93 430.40,113.66" fill="#5f89ba" /><polygon points="290.55,165.43 322.60,170.08 344.34,149.95 313.92,145.85" fill="#5b6a62" /><polygon points="388.11,150.51 404.90,132.61 399.07,103.36 381.28,120.09" fill="#117070" /><polygon points="357.04,146.39 388.11,150.51 381.28,120.09 349.14,116.24" fill="#1b9393" /><polygon points="349.14,116.24 381.28,120.09 399.07,103.36 368.58,99.96" fill="#167b79" /><line x1="349.14" y1="116.24" x2="381.28" y2="120.09" stroke="#43bcbc" stroke-width="1.3"/><polygon points="453.95,133.87 485.05,137.65 495.87,121.14 466.33,117.76" fill="#5f89ba" /><polygon points="525.10,142.62 533.85,125.57 533.57,118.93 524.74,135.73" fill="#3f6890" /><polygon points="492.96,138.70 525.10,142.62 524.74,135.73 492.34,131.87" fill="#6c9bcf" /><polygon points="492.34,131.87 524.74,135.73 533.57,118.93 502.86,115.50" fill="#5a84b4" /><line x1="492.34" y1="131.87" x2="524.74" y2="135.73" stroke="#94c0ea" stroke-width="1.3"/><polygon points="428.16,155.81 442.90,137.32 439.82,117.31 424.51,135.02" fill="#117070" /><polygon points="396.01,151.55 428.16,155.81 424.51,135.02 391.58,130.95" fill="#1b9393" /><polygon points="391.58,130.95 424.51,135.02 439.82,117.31 408.63,113.71" fill="#167b79" /><line x1="391.58" y1="130.95" x2="424.51" y2="135.02" stroke="#43bcbc" stroke-width="1.3"/><polygon points="756.85,170.83 752.26,150.55 754.70,139.96 759.52,159.83" fill="#3a6088" /><polygon points="756.85,170.83 796.47,175.66 799.74,164.56 759.52,159.83" fill="#6c9bcf" /><polygon points="759.52,159.83 799.74,164.56 792.34,144.11 754.70,139.96" fill="#5a84b4" /><line x1="759.52" y1="159.83" x2="799.74" y2="164.56" stroke="#94c0ea" stroke-width="1.3"/><polygon points="330.76,171.26 364.00,176.08 383.57,155.23 352.08,150.99" fill="#5b6a62" /><polygon points="533.27,143.52 566.50,147.56 573.03,129.96 541.58,126.37" fill="#5f89ba" /><polygon points="806.55,176.89 798.81,155.87 829.52,50.15 840.69,66.18" fill="#3a6088" /><polygon points="806.55,176.89 847.67,181.89 888.38,70.00 840.69,66.18" fill="#6c9bcf" /><polygon points="840.69,66.18 888.38,70.00 873.62,53.44 829.52,50.15" fill="#5a84b4" /><line x1="840.69" y1="66.18" x2="888.38" y2="70.00" stroke="#94c0ea" stroke-width="1.3"/><polygon points="574.95,148.59 609.33,152.78 613.49,134.59 581.02,130.88" fill="#5f89ba" /><polygon points="662.70,159.37 663.80,140.43 664.07,138.19 662.98,157.04" fill="#3a6088" /><polygon points="662.70,159.37 699.55,163.86 699.95,161.50 662.98,157.04" fill="#6c9bcf" /><polygon points="662.98,157.04 699.95,161.50 698.84,142.13 664.07,138.19" fill="#5a84b4" /><line x1="662.98" y1="157.04" x2="699.95" y2="161.50" stroke="#94c0ea" stroke-width="1.3"/><polygon points="618.07,153.84 653.66,158.17 655.29,139.37 621.74,135.53" fill="#5f89ba" /><polygon points="817.84,207.30 862.91,213.27 850.54,187.66 808.69,182.48" fill="#177c7a" /><polygon points="469.63,161.30 482.16,142.17 476.11,85.04 462.23,101.75" fill="#117070" /><polygon points="436.34,156.89 469.63,161.30 462.23,101.75 426.58,97.90" fill="#1b9393" /><polygon points="426.58,97.90 462.23,101.75 476.11,85.04 442.49,81.67" fill="#167b79" /><line x1="426.58" y1="97.90" x2="462.23" y2="101.75" stroke="#43bcbc" stroke-width="1.3"/><polygon points="708.93,165.00 707.29,145.41 724.50,46.01 727.60,61.03" fill="#3a6088" /><polygon points="708.93,165.00 747.13,169.65 771.24,64.59 727.60,61.03" fill="#6c9bcf" /><polygon points="727.60,61.03 771.24,64.59 765.11,49.10 724.50,46.01" fill="#5a84b4" /><line x1="727.60" y1="61.03" x2="771.24" y2="64.59" stroke="#94c0ea" stroke-width="1.3"/><polygon points="372.46,177.31 406.96,182.31 424.17,160.70 391.58,156.31" fill="#5b6a62" /><polygon points="512.60,166.99 522.75,147.20 521.99,133.64 511.61,152.90" fill="#117070" /><polygon points="478.10,162.42 512.60,166.99 511.61,152.90 476.52,148.46" fill="#1b9393" /><polygon points="476.52,148.46 511.61,152.90 521.99,133.64 488.88,129.72" fill="#167b79" /><line x1="476.52" y1="148.46" x2="511.61" y2="152.90" stroke="#43bcbc" stroke-width="1.3"/><polygon points="763.50,200.21 758.09,176.32 764.75,149.22 770.85,172.03" fill="#0a5856" /><polygon points="763.50,200.21 806.77,205.94 815.89,177.50 770.85,172.03" fill="#1b9393" /><polygon points="770.85,172.03 815.89,177.50 806.58,153.97 764.75,149.22" fill="#167b79" /><line x1="770.85" y1="172.03" x2="815.89" y2="177.50" stroke="#43bcbc" stroke-width="1.3"/><polygon points="415.74,183.58 451.56,188.78 466.24,166.37 432.47,161.82" fill="#5b6a62" /><polygon points="557.13,172.89 564.74,152.39 564.55,104.10 556.44,122.57" fill="#117070" /><polygon points="521.38,168.15 557.13,172.89 556.44,122.57 518.42,118.31" fill="#1b9393" /><polygon points="518.42,118.31 556.44,122.57 564.55,104.10 528.84,100.38" fill="#167b79" /><line x1="518.42" y1="118.31" x2="556.44" y2="122.57" stroke="#43bcbc" stroke-width="1.3"/><polygon points="661.12,186.55 701.13,191.85 699.86,169.02 662.41,164.38" fill="#177c7a" /><polygon points="603.33,179.00 608.20,157.77 609.43,133.63 604.49,153.89" fill="#117070" /><polygon points="566.24,174.09 603.33,179.00 604.49,153.89 566.19,149.21" fill="#1b9393" /><polygon points="566.19,149.21 604.49,153.89 609.43,133.63 573.48,129.52" fill="#167b79" /><line x1="566.19" y1="149.21" x2="604.49" y2="153.89" stroke="#43bcbc" stroke-width="1.3"/><polygon points="711.31,193.30 709.38,170.29 719.47,114.64 722.30,135.26" fill="#0a5856" /><polygon points="711.31,193.30 752.90,198.81 767.31,140.21 722.30,135.26" fill="#1b9393" /><polygon points="722.30,135.26 767.31,140.21 761.27,118.91 719.47,114.64" fill="#167b79" /><line x1="722.30" y1="135.26" x2="767.31" y2="140.21" stroke="#43bcbc" stroke-width="1.3"/><polygon points="831.33,243.85 881.18,251.08 866.29,220.27 820.34,214.08" fill="#5b6a62" /><polygon points="612.78,180.26 651.29,185.35 656.26,139.76 615.42,135.08" fill="#1b9393" /><polygon points="615.42,135.08 656.26,139.76 657.95,119.57 619.77,115.50" fill="#167b79" /><line x1="615.42" y1="135.08" x2="656.26" y2="139.76" stroke="#43bcbc" stroke-width="1.3"/><polygon points="460.69,190.10 497.91,195.50 509.85,172.24 474.84,167.53" fill="#5b6a62" /><polygon points="771.43,235.27 764.97,206.72 765.52,204.66 772.04,233.14" fill="#4a5850" /><polygon points="771.43,235.27 819.11,242.19 819.87,240.04 772.04,233.14" fill="#6a7a72" /><polygon points="772.04,233.14 819.87,240.04 809.74,210.58 765.52,204.66" fill="#5b6a62" /><line x1="772.04" y1="233.14" x2="819.87" y2="240.04" stroke="#7d8c84" stroke-width="1.3"/><polygon points="507.40,196.88 546.11,202.49 555.07,178.34 518.76,173.44" fill="#5b6a62" /><polygon points="714.15,226.86 759.80,233.48 754.20,205.16 711.85,199.46" fill="#5b6a62" /><polygon points="555.98,203.92 596.27,209.76 602.02,184.66 564.32,179.58" fill="#5b6a62" /><polygon points="659.23,218.89 702.98,225.24 701.47,198.06 660.76,192.58" fill="#5b6a62" /><polygon points="606.55,211.25 648.52,217.34 650.78,191.23 611.62,185.96" fill="#5b6a62" /></g></svg>
<div class="t" style="left:0px;top:619.11px;font-size:10.5px;color:#111;width:80px;text-align:right;left:406.4px;">210,000</div>
<div class="t" style="left:0px;top:638.11px;font-size:10.5px;color:#111;width:80px;text-align:right;left:413.0px;">180,000</div>
<div class="t" style="left:0px;top:656.91px;font-size:10.5px;color:#111;width:80px;text-align:right;left:421.1px;">150,000</div>
<div class="t" style="left:0px;top:673.91px;font-size:10.5px;color:#111;width:80px;text-align:right;left:428.5px;">120,000</div>
<div class="t" style="left:0px;top:691.11px;font-size:10.5px;color:#111;width:80px;text-align:right;left:435.2px;">90,000</div>
<div class="t" style="left:0px;top:705.91px;font-size:10.5px;color:#111;width:80px;text-align:right;left:441.4px;">60,000</div>
<div class="t" style="left:0px;top:721.91px;font-size:10.5px;color:#111;width:80px;text-align:right;left:447.5px;">30,000</div>
<div class="t" style="left:0px;top:754.61px;font-size:10.5px;color:#111;width:30px;text-align:center;left:557.0px;">1</div>
<div class="t" style="left:0px;top:760.91px;font-size:10.5px;color:#111;width:30px;text-align:center;left:597.8px;">2</div>
<div class="t" style="left:0px;top:766.91px;font-size:10.5px;color:#111;width:30px;text-align:center;left:640.7px;">3</div>
<div class="t" style="left:0px;top:773.91px;font-size:10.5px;color:#111;width:30px;text-align:center;left:685.6px;">4</div>
<div class="t" style="left:0px;top:781.41px;font-size:10.5px;color:#111;width:30px;text-align:center;left:731.6px;">5</div>
<div class="t" style="left:0px;top:787.91px;font-size:10.5px;color:#111;width:30px;text-align:center;left:779.5px;">6</div>
<div class="t" style="left:0px;top:795.91px;font-size:10.5px;color:#111;width:30px;text-align:center;left:830.0px;">7</div>
<div class="t" style="left:0px;top:803.91px;font-size:10.5px;color:#111;width:30px;text-align:center;left:882.0px;">8</div>
<div class="t" style="left:0px;top:811.91px;font-size:10.5px;color:#111;width:30px;text-align:center;left:937.0px;">9</div>
<div class="t" style="left:0px;top:820.91px;font-size:10.5px;color:#111;width:30px;text-align:center;left:998.0px;">10</div>
<div class="t" style="left:0px;top:829.91px;font-size:10.5px;color:#111;width:30px;text-align:center;left:1056.0px;">11</div>
<div class="t" style="left:1122px;top:743.91px;font-size:10.5px;color:#111;letter-spacing:-0.169px;">Fiscal 2006</div>
<div class="t" style="left:1139px;top:773.91px;font-size:10.5px;color:#111;letter-spacing:-0.169px;">Fiscal 2005</div>
<div class="t" style="left:1158px;top:809.91px;font-size:10.5px;color:#111;letter-spacing:-0.169px;">Fiscal 2004</div>
<div class="a" style="left:1393px;top:90px;width:2px;height:478px;background:#fff"></div>
<div class="a" style="left:1394px;top:119px;width:1px;height:409px;background:#cfd4dc"></div>
<div class="a" style="left:1395px;top:65px;width:3px;height:777px;background:#f8f8f8"></div>
<div class="a" style="left:1398px;top:65px;width:2px;height:777px;background:#c4c8ce"></div>
<div class="a" style="left:1400px;top:65px;width:5px;height:777px;background:#fff"></div>
<div class="a" style="left:1400px;top:65px;width:5px;height:20px;background:#b9c7d8"></div>
<div class="a" style="left:1402px;top:70px;width:2px;height:10px;border-left:1.5px solid #333;border-radius:2px 0 0 2px"></div>
<div class="a" style="left:1400px;top:324px;width:5px;height:22px;background:#a9b9cf"></div>
<div class="a" style="left:1402px;top:328px;width:1.5px;height:12px;background:#333"></div>
<div class="a" style="left:1400px;top:586px;width:5px;height:21px;background:#a9b9cf"></div>
<div class="a" style="left:1402px;top:590px;width:2px;height:11px;border-left:1.5px solid #333;border-radius:2px 0 0 2px"></div></body></html>
